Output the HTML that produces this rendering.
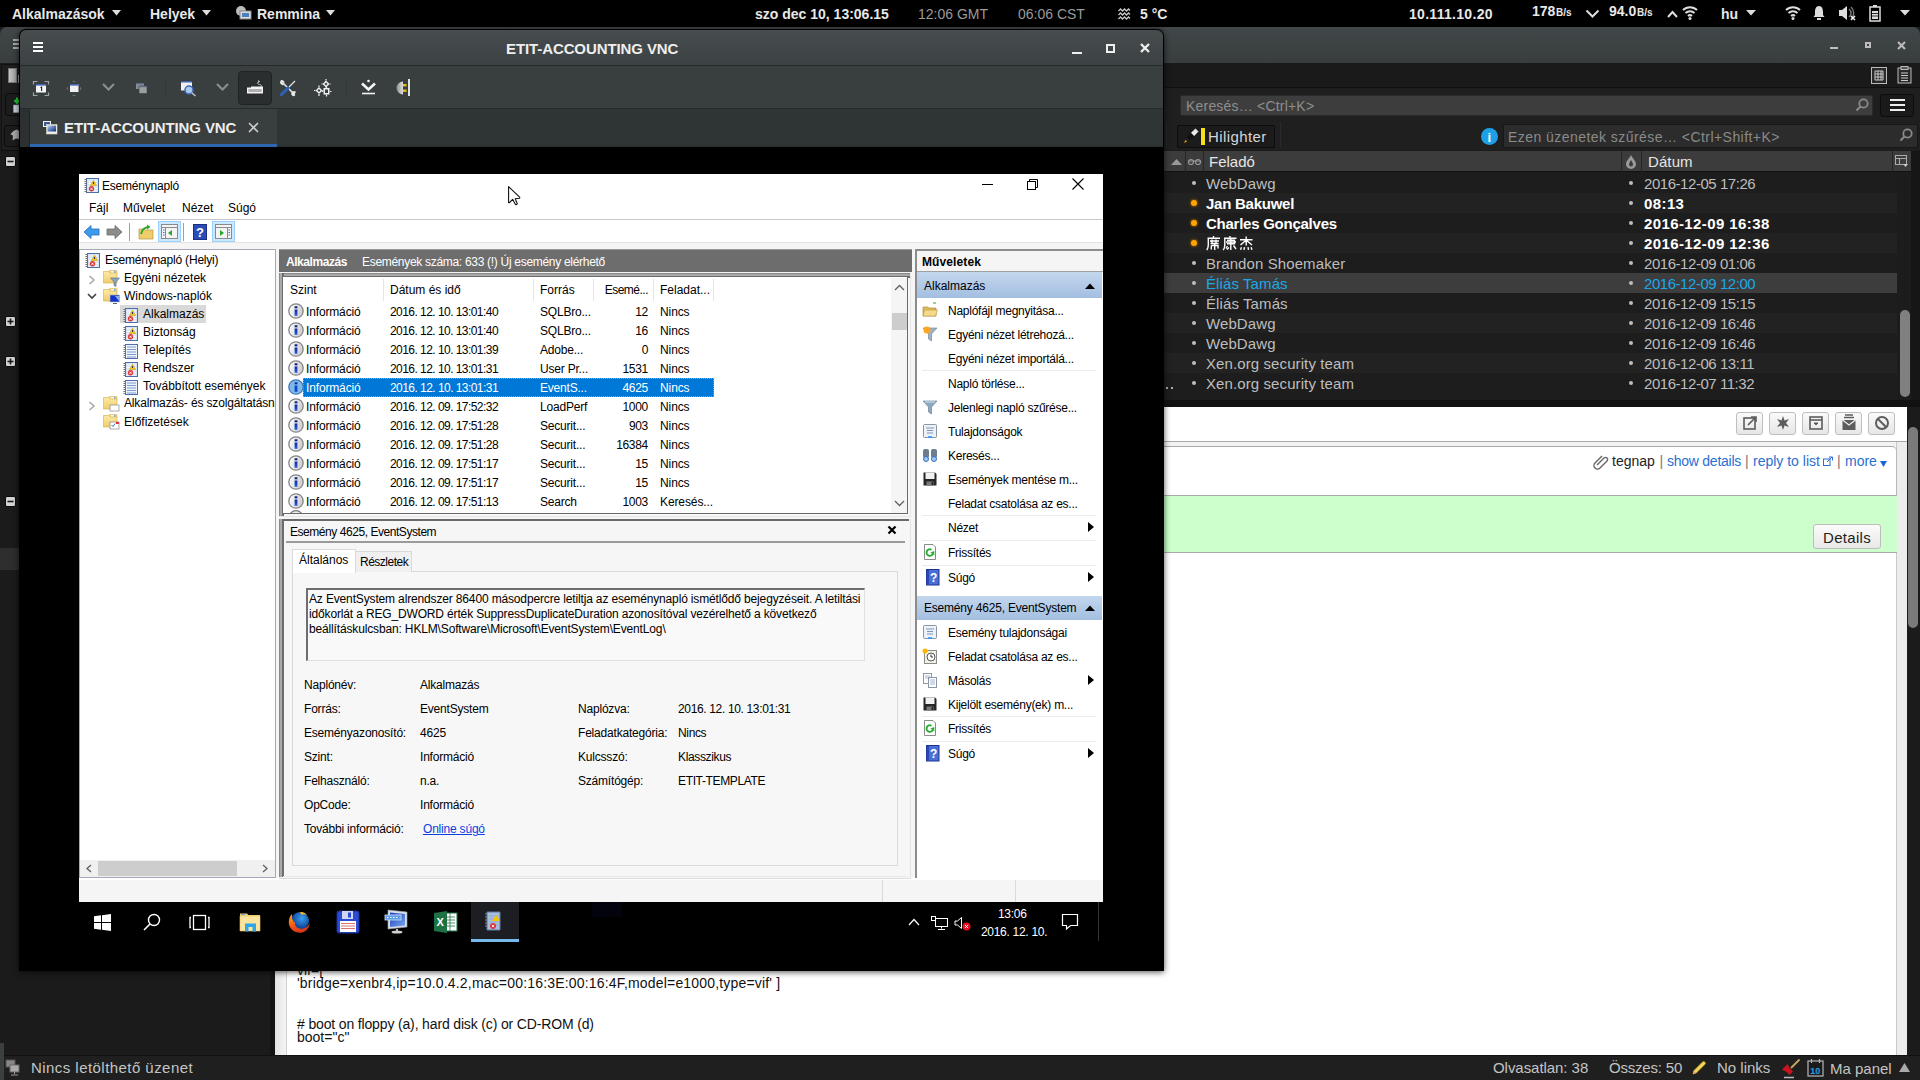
<!DOCTYPE html><html><head><meta charset="utf-8"><style>
*{margin:0;padding:0;box-sizing:border-box}
html,body{width:1920px;height:1080px;overflow:hidden;background:#1b1b1b;font-family:"Liberation Sans",sans-serif}
.a{position:absolute}
.t{position:absolute;white-space:nowrap;line-height:1}
svg{overflow:visible}
</style></head><body>
<div class="a" style="left:0px;top:27px;width:1920px;height:1053px;background:#1c1c1c"></div>
<div class="a" style="left:0px;top:27px;width:1920px;height:36px;background:linear-gradient(#414748,#383d3e);border-radius:7px 7px 0 0"></div>
<div class="a" style="left:1830px;top:47px;width:8px;height:2px;background:#bdbdbd"></div>
<div class="a" style="left:1865px;top:42px;width:6px;height:6px;border:2px solid #bdbdbd"></div>
<svg class="a" style="left:1897px;top:41px;" width="9" height="9" viewBox="0 0 9 9"><path d="M1 1L8 8M8 1L1 8" stroke="#bdbdbd" stroke-width="2"/></svg>
<div class="a" style="left:13px;top:39px;width:7px;height:2px;background:#aaa"></div>
<div class="a" style="left:13px;top:43px;width:7px;height:2px;background:#aaa"></div>
<div class="a" style="left:13px;top:47px;width:7px;height:2px;background:#aaa"></div>
<div class="a" style="left:0px;top:63px;width:1920px;height:25px;background:#1a1a1a;border-bottom:1px solid #101010"></div>
<svg class="a" style="left:1871px;top:67px;" width="16" height="17" viewBox="0 0 16 17"><rect x="0.5" y="0.5" width="15" height="16" fill="#2a2a2a" stroke="#bbb"/><path d="M4 4h8v9H4z" fill="none" stroke="#ccc"/><path d="M4 7h8M4 10h8M7 4v9M10 4v9" stroke="#ccc"/></svg>
<svg class="a" style="left:1897px;top:66px;" width="15" height="18" viewBox="0 0 15 18"><rect x="1" y="2" width="13" height="15" fill="#2a2a2a" stroke="#bbb"/><rect x="4" y="0.5" width="7" height="3" fill="#555" stroke="#bbb"/><path d="M4 7h7M4 9.5h7M4 12h7M4 14.5h7" stroke="#ccc"/></svg>
<div class="a" style="left:0px;top:88px;width:1920px;height:62px;background:#1f1f1f"></div>
<div class="a" style="left:1180px;top:95px;width:693px;height:21px;background:#3d3d3d;border:1px solid #2a2a2a;border-radius:2px"></div>
<div class="t" style="left:1186px;top:99.15px;font-size:14px;color:#8e8e8e;font-weight:normal;letter-spacing:0.2px">Keresés… &lt;Ctrl+K&gt;</div>
<svg class="a" style="left:1855px;top:98px;" width="14" height="14" viewBox="0 0 14 14"><circle cx="8.5" cy="5.5" r="4.2" fill="none" stroke="#8a8a8a" stroke-width="1.8"/><path d="M5.5 8.5L1.5 12.5" stroke="#8a8a8a" stroke-width="2"/></svg>
<div class="a" style="left:1880px;top:94px;width:34px;height:23px;background:#1a1a1a;border:1px solid #0c0c0c;border-radius:3px"></div>
<div class="a" style="left:1890px;top:99px;width:15px;height:2px;background:#eee"></div>
<div class="a" style="left:1890px;top:104px;width:15px;height:2px;background:#eee"></div>
<div class="a" style="left:1890px;top:109px;width:15px;height:2px;background:#eee"></div>
<div class="a" style="left:1166px;top:122px;width:1px;height:26px;background:#2a2a2a"></div>
<div class="a" style="left:1177px;top:125px;width:98px;height:23px;background:#1b1b1b;border:1px solid #0d0d0d;border-radius:2px"></div>
<svg class="a" style="left:1183px;top:128px;" width="16" height="16" viewBox="0 0 16 16"><path d="M8 5L12.5 0.8L15.2 3.5L11 8Z" fill="#ececec" stroke="#bdbdbd" stroke-width="0.6"/><path d="M8 5L11 8L6.5 12.5L3.5 9.5Z" fill="#111"/><path d="M3.5 9.5L6.5 12.5L4 13.5L2.5 12Z" fill="#222"/><path d="M2.5 12L4 13.5L1 15Z" fill="#f5a000"/></svg>
<div class="a" style="left:1201px;top:128px;width:4px;height:17px;background:#f7e01a"></div>
<div class="t" style="left:1208px;top:129.30px;font-size:15px;color:#d6d6d6;font-weight:normal;letter-spacing:0.4px">Hilighter</div>
<div class="a" style="left:1280px;top:122px;width:1px;height:26px;background:#2a2a2a"></div>
<div class="a" style="left:1481px;top:128px;width:17px;height:17px;border-radius:50%;background:#1ea0e8"></div>
<div class="t" style="left:1487.5px;top:131.00px;font-size:13px;color:#fff;font-weight:bold;">i</div>
<div class="a" style="left:1503px;top:124px;width:415px;height:24px;background:#2c2c2c;border:1px solid #171717;border-radius:2px"></div>
<div class="t" style="left:1508px;top:130.15px;font-size:14px;color:#8a8a8a;font-weight:normal;letter-spacing:0.45px">Ezen üzenetek szűrése… &lt;Ctrl+Shift+K&gt;</div>
<svg class="a" style="left:1899px;top:128px;" width="14" height="14" viewBox="0 0 14 14"><circle cx="8.5" cy="5.5" r="4.2" fill="none" stroke="#8a8a8a" stroke-width="1.8"/><path d="M5.5 8.5L1.5 12.5" stroke="#8a8a8a" stroke-width="2"/></svg>
<div class="a" style="left:1164px;top:151px;width:747px;height:21px;background:#3c3c3c;border-bottom:1px solid #121212"></div>
<div class="a" style="left:1185px;top:151px;width:1px;height:21px;background:#262626"></div>
<div class="a" style="left:1203px;top:151px;width:1px;height:21px;background:#262626"></div>
<div class="a" style="left:1621px;top:151px;width:1px;height:21px;background:#262626"></div>
<div class="a" style="left:1641px;top:151px;width:1px;height:21px;background:#262626"></div>
<div class="a" style="left:1892px;top:151px;width:1px;height:21px;background:#262626"></div>
<svg class="a" style="left:1170px;top:157px;" width="13" height="9" viewBox="0 0 13 9"><path d="M1 8L6.5 2L12 8Z" fill="#9a9a9a"/></svg>
<svg class="a" style="left:1187px;top:158px;" width="15" height="8" viewBox="0 0 15 8"><circle cx="4" cy="4" r="2.5" fill="none" stroke="#999" stroke-width="1.2"/><circle cx="11" cy="4" r="2.5" fill="none" stroke="#999" stroke-width="1.2"/><path d="M1 3h13" stroke="#999" stroke-width="1"/></svg>
<div class="t" style="left:1209px;top:154.30px;font-size:15px;color:#e6e6e6;font-weight:normal;letter-spacing:0px">Feladó</div>
<svg class="a" style="left:1624px;top:154px;" width="14" height="15" viewBox="0 0 14 15"><path d="M7 1C9 5 12 7 12 10A5 5 0 0 1 2 10C2 7 5 5 7 1Z" fill="#9a9a9a"/><path d="M7 6C8 8 9 9 9 10.5A2 2 0 0 1 5 10.5C5 9 6 8 7 6Z" fill="#3c3c3c"/></svg>
<div class="t" style="left:1648px;top:154.30px;font-size:15px;color:#e6e6e6;font-weight:normal;letter-spacing:0.1px">Dátum</div>
<svg class="a" style="left:1895px;top:155px;" width="14" height="13" viewBox="0 0 14 13"><rect x="0.5" y="0.5" width="11" height="9" fill="none" stroke="#aaa"/><path d="M0.5 3.5h11M4.5 3.5v6" stroke="#aaa"/><path d="M8 9L13 9L10.5 12Z" fill="#ccc"/></svg>
<div class="a" style="left:1164px;top:173px;width:735px;height:20px;background:#1d1d1d"></div>
<div class="a" style="left:1192px;top:181px;width:4px;height:4px;background:#bdbdbd;border-radius:50%"></div>
<div class="a" style="left:1629px;top:181px;width:4px;height:4px;background:#bdbdbd;border-radius:50%"></div>
<div class="t" style="left:1206px;top:176.30px;font-size:15px;color:#bdbdbd;font-weight:normal;letter-spacing:0.1px">WebDawg</div>
<div class="t" style="left:1644px;top:176.30px;font-size:15px;color:#bdbdbd;font-weight:normal;letter-spacing:-0.45px">2016-12-05 17:26</div>
<div class="a" style="left:1164px;top:193px;width:735px;height:20px;background:#222222"></div>
<div class="a" style="left:1191px;top:200px;width:6px;height:6px;border-radius:50%;background:#ffa400;box-shadow:0 0 2px 1px #7a4a00"></div>
<div class="a" style="left:1629px;top:201px;width:4px;height:4px;background:#bdbdbd;border-radius:50%"></div>
<div class="t" style="left:1206px;top:196.30px;font-size:15px;color:#ffffff;font-weight:bold;letter-spacing:-0.25px">Jan Bakuwel</div>
<div class="t" style="left:1644px;top:196.30px;font-size:15px;color:#ffffff;font-weight:bold;letter-spacing:0.4px">08:13</div>
<div class="a" style="left:1164px;top:213px;width:735px;height:20px;background:#1d1d1d"></div>
<div class="a" style="left:1191px;top:220px;width:6px;height:6px;border-radius:50%;background:#ffa400;box-shadow:0 0 2px 1px #7a4a00"></div>
<div class="a" style="left:1629px;top:221px;width:4px;height:4px;background:#bdbdbd;border-radius:50%"></div>
<div class="t" style="left:1206px;top:216.30px;font-size:15px;color:#ffffff;font-weight:bold;letter-spacing:-0.25px">Charles Gonçalves</div>
<div class="t" style="left:1644px;top:216.30px;font-size:15px;color:#ffffff;font-weight:bold;letter-spacing:0.4px">2016-12-09 16:38</div>
<div class="a" style="left:1164px;top:233px;width:735px;height:20px;background:#222222"></div>
<div class="a" style="left:1191px;top:240px;width:6px;height:6px;border-radius:50%;background:#ffa400;box-shadow:0 0 2px 1px #7a4a00"></div>
<div class="a" style="left:1629px;top:241px;width:4px;height:4px;background:#bdbdbd;border-radius:50%"></div>
<svg class="a" style="left:1206px;top:236px;" width="48" height="15" viewBox="0 0 48 15"><g stroke="#fff" stroke-width="1.4" fill="none"><path d="M7.5 0v2M1.5 2.3H14M2.3 2.3V9Q2.3 12 0.7 14M4 5H13M6 3.5V7.5M10 3.5V7.5M4.5 7.5H12.5M5.3 9.5V13.5M5.3 9.5H12V12.5M8.7 8V14"/><g transform="translate(16.5,0)"><path d="M7.5 0v2M1.5 2.3H14M2.3 2.3V9Q2.3 12 0.7 14M4.5 4.3H12V7.8H4.5M3.5 6H13.5M8.3 3V14M5 10L3.5 12.5M11 9.5L13.5 13M6.5 11.5L4.5 13.5"/></g><g transform="translate(33,0)"><path d="M1 3.8H13.5M7.2 0.5V9.5M7 4.2L1.5 9M7.4 4.2L13 9M2.5 11.2L1.5 13.8M5.5 11.2L5 13.8M9 11.2L9.5 13.8M12 11.2L13 13.8"/></g></g></svg>
<div class="t" style="left:1644px;top:236.30px;font-size:15px;color:#ffffff;font-weight:bold;letter-spacing:0.4px">2016-12-09 12:36</div>
<div class="a" style="left:1164px;top:253px;width:735px;height:20px;background:#1d1d1d"></div>
<div class="a" style="left:1192px;top:261px;width:4px;height:4px;background:#bdbdbd;border-radius:50%"></div>
<div class="a" style="left:1629px;top:261px;width:4px;height:4px;background:#bdbdbd;border-radius:50%"></div>
<div class="t" style="left:1206px;top:256.30px;font-size:15px;color:#bdbdbd;font-weight:normal;letter-spacing:0.1px">Brandon Shoemaker</div>
<div class="t" style="left:1644px;top:256.30px;font-size:15px;color:#bdbdbd;font-weight:normal;letter-spacing:-0.45px">2016-12-09 01:06</div>
<div class="a" style="left:1164px;top:273px;width:735px;height:20px;background:#3d3d3d"></div>
<div class="a" style="left:1192px;top:281px;width:4px;height:4px;background:#bdbdbd;border-radius:50%"></div>
<div class="a" style="left:1629px;top:281px;width:4px;height:4px;background:#bdbdbd;border-radius:50%"></div>
<div class="t" style="left:1206px;top:276.30px;font-size:15px;color:#1ba8e8;font-weight:normal;letter-spacing:0.1px">Éliás Tamás</div>
<div class="t" style="left:1644px;top:276.30px;font-size:15px;color:#1ba8e8;font-weight:normal;letter-spacing:-0.45px">2016-12-09 12:00</div>
<div class="a" style="left:1164px;top:293px;width:735px;height:20px;background:#1d1d1d"></div>
<div class="a" style="left:1192px;top:301px;width:4px;height:4px;background:#bdbdbd;border-radius:50%"></div>
<div class="a" style="left:1629px;top:301px;width:4px;height:4px;background:#bdbdbd;border-radius:50%"></div>
<div class="t" style="left:1206px;top:296.30px;font-size:15px;color:#bdbdbd;font-weight:normal;letter-spacing:0.1px">Éliás Tamás</div>
<div class="t" style="left:1644px;top:296.30px;font-size:15px;color:#bdbdbd;font-weight:normal;letter-spacing:-0.45px">2016-12-09 15:15</div>
<div class="a" style="left:1164px;top:313px;width:735px;height:20px;background:#222222"></div>
<div class="a" style="left:1192px;top:321px;width:4px;height:4px;background:#bdbdbd;border-radius:50%"></div>
<div class="a" style="left:1629px;top:321px;width:4px;height:4px;background:#bdbdbd;border-radius:50%"></div>
<div class="t" style="left:1206px;top:316.30px;font-size:15px;color:#bdbdbd;font-weight:normal;letter-spacing:0.1px">WebDawg</div>
<div class="t" style="left:1644px;top:316.30px;font-size:15px;color:#bdbdbd;font-weight:normal;letter-spacing:-0.45px">2016-12-09 16:46</div>
<div class="a" style="left:1164px;top:333px;width:735px;height:20px;background:#1d1d1d"></div>
<div class="a" style="left:1192px;top:341px;width:4px;height:4px;background:#bdbdbd;border-radius:50%"></div>
<div class="a" style="left:1629px;top:341px;width:4px;height:4px;background:#bdbdbd;border-radius:50%"></div>
<div class="t" style="left:1206px;top:336.30px;font-size:15px;color:#bdbdbd;font-weight:normal;letter-spacing:0.1px">WebDawg</div>
<div class="t" style="left:1644px;top:336.30px;font-size:15px;color:#bdbdbd;font-weight:normal;letter-spacing:-0.45px">2016-12-09 16:46</div>
<div class="a" style="left:1164px;top:353px;width:735px;height:20px;background:#222222"></div>
<div class="a" style="left:1192px;top:361px;width:4px;height:4px;background:#bdbdbd;border-radius:50%"></div>
<div class="a" style="left:1629px;top:361px;width:4px;height:4px;background:#bdbdbd;border-radius:50%"></div>
<div class="t" style="left:1206px;top:356.30px;font-size:15px;color:#bdbdbd;font-weight:normal;letter-spacing:0.1px">Xen.org security team</div>
<div class="t" style="left:1644px;top:356.30px;font-size:15px;color:#bdbdbd;font-weight:normal;letter-spacing:-0.45px">2016-12-06 13:11</div>
<div class="a" style="left:1164px;top:373px;width:735px;height:20px;background:#1d1d1d"></div>
<div class="a" style="left:1192px;top:381px;width:4px;height:4px;background:#bdbdbd;border-radius:50%"></div>
<div class="a" style="left:1629px;top:381px;width:4px;height:4px;background:#bdbdbd;border-radius:50%"></div>
<div class="t" style="left:1206px;top:376.30px;font-size:15px;color:#bdbdbd;font-weight:normal;letter-spacing:0.1px">Xen.org security team</div>
<div class="t" style="left:1644px;top:376.30px;font-size:15px;color:#bdbdbd;font-weight:normal;letter-spacing:-0.45px">2016-12-07 11:32</div>
<div class="a" style="left:1164px;top:393px;width:733px;height:7px;background:#1d1d1d"></div>
<div class="a" style="left:1166px;top:387px;width:2px;height:2px;background:#aaa"></div>
<div class="a" style="left:1171px;top:387px;width:2px;height:2px;background:#aaa"></div>
<div class="a" style="left:1911px;top:151px;width:9px;height:256px;background:#161616"></div>
<div class="a" style="left:1897px;top:172px;width:14px;height:228px;background:#1c1c1c"></div>
<div class="a" style="left:1900px;top:310px;width:10px;height:87px;background:#808080;border-radius:5px"></div>
<div class="a" style="left:0px;top:400px;width:1920px;height:7px;background:#111"></div>
<div class="a" style="left:275px;top:407px;width:1632px;height:648px;background:#fff"></div>
<div class="a" style="left:275px;top:407px;width:11px;height:648px;background:linear-gradient(90deg,#e4e4e4,#f4f4f4)"></div>
<div class="a" style="left:286px;top:407px;width:1px;height:648px;background:#d0d0d0"></div>
<div class="a" style="left:1164px;top:441px;width:743px;height:1px;background:#a8a8a8"></div>
<div class="a" style="left:1164px;top:442px;width:743px;height:4px;background:#f3f3f3"></div>
<div class="a" style="left:1896px;top:442px;width:11px;height:613px;background:#ececec;border-left:1px solid #c8c8c8"></div>
<div class="a" style="left:1164px;top:446px;width:733px;height:60px;border-top:1px solid #a8a8a8;border-right:1px solid #b8b8b8;border-top-right-radius:5px"></div>
<div class="a" style="left:1736px;top:412px;width:27px;height:23px;border:1px solid #bfbfbf;border-radius:3px;background:linear-gradient(#fafafa,#e6e6e6)"></div>
<svg class="a" style="left:1742px;top:414px;" width="16" height="18" viewBox="0 0 16 18"><rect x="2" y="4" width="11" height="11" fill="none" stroke="#5c5c5c" stroke-width="1.6"/><path d="M6 11L13 4M9 3h5v5" stroke="#5c5c5c" stroke-width="1.6" fill="none"/></svg>
<div class="a" style="left:1769px;top:412px;width:27px;height:23px;border:1px solid #bfbfbf;border-radius:3px;background:linear-gradient(#fafafa,#e6e6e6)"></div>
<svg class="a" style="left:1775px;top:415px;" width="16" height="16" viewBox="0 0 16 16"><path d="M8 1L9.5 5.5L14 4L11 8L14 12L9.5 10.5L8 15L6.5 10.5L2 12L5 8L2 4L6.5 5.5Z" fill="#5c5c5c"/></svg>
<div class="a" style="left:1802px;top:412px;width:27px;height:23px;border:1px solid #bfbfbf;border-radius:3px;background:linear-gradient(#fafafa,#e6e6e6)"></div>
<svg class="a" style="left:1808px;top:415px;" width="16" height="16" viewBox="0 0 16 16"><rect x="2" y="2" width="12" height="12" fill="none" stroke="#5c5c5c" stroke-width="1.6"/><path d="M2 5h12" stroke="#5c5c5c" stroke-width="1.6"/><path d="M6 8h4l-2 2Z" fill="#5c5c5c" stroke="#5c5c5c"/></svg>
<div class="a" style="left:1835px;top:412px;width:27px;height:23px;border:1px solid #bfbfbf;border-radius:3px;background:linear-gradient(#fafafa,#e6e6e6)"></div>
<svg class="a" style="left:1841px;top:414px;" width="16" height="18" viewBox="0 0 16 18"><path d="M4 1h8M3 3.5h10" stroke="#5c5c5c" stroke-width="1.4"/><path d="M1.5 6h13v10h-13Z" fill="#5c5c5c"/><path d="M1.5 6L8 11L14.5 6" stroke="#eee" stroke-width="1.2" fill="none"/></svg>
<div class="a" style="left:1868px;top:412px;width:27px;height:23px;border:1px solid #bfbfbf;border-radius:3px;background:linear-gradient(#fafafa,#e6e6e6)"></div>
<svg class="a" style="left:1874px;top:415px;" width="16" height="16" viewBox="0 0 16 16"><circle cx="8" cy="8" r="6" fill="none" stroke="#5c5c5c" stroke-width="2"/><path d="M4 4L12 12" stroke="#5c5c5c" stroke-width="2"/></svg>
<svg class="a" style="left:1594px;top:454px;" width="14" height="14" viewBox="0 0 14 14"><path d="M3 11L10 4A2 2 0 0 1 13 7L6 14A3.5 3.5 0 0 1 1 9L8 2" fill="none" stroke="#666" stroke-width="1.4"/></svg>
<div class="t" style="left:1612px;top:454.15px;font-size:14px;color:#222;font-weight:normal;">tegnap</div>
<div class="t" style="left:1659.5px;top:454.15px;font-size:14px;color:#777;font-weight:normal;">|</div>
<div class="t" style="left:1667px;top:454.15px;font-size:14px;color:#2a6fd1;font-weight:normal;letter-spacing:-0.25px">show details</div>
<div class="t" style="left:1745px;top:454.15px;font-size:14px;color:#777;font-weight:normal;">|</div>
<div class="t" style="left:1753px;top:454.15px;font-size:14px;color:#2a6fd1;font-weight:normal;">reply to list</div>
<svg class="a" style="left:1823px;top:456px;" width="10" height="10" viewBox="0 0 10 10"><rect x="0.5" y="3" width="6.5" height="6.5" fill="none" stroke="#2a6fd1"/><path d="M4 6L9 1M6 1h3.5v3.5" stroke="#2a6fd1" fill="none"/></svg>
<div class="t" style="left:1837px;top:454.15px;font-size:14px;color:#777;font-weight:normal;">|</div>
<div class="t" style="left:1845px;top:454.15px;font-size:14px;color:#2a6fd1;font-weight:normal;">more</div>
<svg class="a" style="left:1880px;top:461px;" width="7" height="6" viewBox="0 0 7 6"><path d="M0 0h7L3.5 6Z" fill="#1a64e0"/></svg>
<div class="a" style="left:1164px;top:495px;width:733px;height:1px;background:#a9a9a9"></div>
<div class="a" style="left:1164px;top:496px;width:733px;height:56px;background:#ccffcc"></div>
<div class="a" style="left:1164px;top:552px;width:733px;height:1px;background:#a9a9a9"></div>
<div class="a" style="left:1813px;top:524px;width:68px;height:25px;border:1px solid #bdbdbd;border-radius:3px;background:linear-gradient(#fbfbfb,#e8e8e8)"></div>
<div class="t" style="left:1823px;top:530.30px;font-size:15px;color:#222;font-weight:normal;letter-spacing:0.3px">Details</div>
<div class="a" style="left:1907px;top:407px;width:13px;height:648px;background:#1b1b1b"></div>
<div class="a" style="left:1908px;top:427px;width:10px;height:201px;background:#7a7a7a;border-radius:5px"></div>
<div class="t" style="left:297px;top:963.15px;font-size:14px;color:#111;font-weight:normal;">vif=[</div>
<div class="t" style="left:297px;top:975.65px;font-size:14px;color:#111;font-weight:normal;letter-spacing:0.18px">'bridge=xenbr4,ip=10.0.4.2,mac=00:16:3E:00:16:4F,model=e1000,type=vif' ]</div>
<div class="t" style="left:297px;top:1016.65px;font-size:14px;color:#111;font-weight:normal;letter-spacing:-0.15px"># boot on floppy (a), hard disk (c) or CD-ROM (d)</div>
<div class="t" style="left:297px;top:1029.65px;font-size:14px;color:#111;font-weight:normal;">boot="c"</div>
<div class="a" style="left:0px;top:63px;width:275px;height:992px;background:#1b1b1b"></div>
<div class="a" style="left:270px;top:407px;width:5px;height:648px;background:#141414"></div>
<div class="a" style="left:1px;top:64px;width:19px;height:86px;background:#1e1e1e;border-left:1px solid #121212;border-top:1px solid #121212"></div>
<div class="a" style="left:8px;top:68px;width:9px;height:15px;background:linear-gradient(90deg,#c4c4c4,#9c9c9c);border:1px solid #777"></div>
<div class="a" style="left:18px;top:75px;width:1px;height:8px;background:#999"></div>
<div class="a" style="left:5px;top:93px;width:15px;height:23px;background:#1c1c1c;border:1px solid #0c0c0c;border-radius:3px"></div>
<svg class="a" style="left:13px;top:97px;" width="7" height="16" viewBox="0 0 7 16"><path d="M4 0.5v4M1.5 3l2.5 3l2.5-3" stroke="#1fc22a" stroke-width="2" fill="none"/><path d="M0.5 8h7v7.5h-7Z" fill="#c8d0d8" stroke="#8a96a6" stroke-width="0.6"/></svg>
<div class="a" style="left:4px;top:125px;width:16px;height:22px;background:#1c1c1c;border:1px solid #0c0c0c;border-radius:3px"></div>
<svg class="a" style="left:10px;top:129px;" width="9" height="12" viewBox="0 0 9 12"><path d="M7 0.5C4 1 2 3 0.5 5.5L3 6.5L2.5 11.5L6 9.5L9 10V2Z" fill="#a8a8a8"/></svg>
<div class="a" style="left:1px;top:150px;width:19px;height:1px;background:#0e0e0e"></div>
<svg class="a" style="left:5px;top:156px;" width="11" height="11" viewBox="0 0 11 11"><rect x="0.5" y="0.5" width="10" height="10" rx="1.5" fill="#d4d4d4" stroke="#0a0a0a"/><path d="M2.5 5.5h6" stroke="#1a1a1a" stroke-width="1.6"/></svg>
<svg class="a" style="left:5px;top:316px;" width="11" height="11" viewBox="0 0 11 11"><rect x="0.5" y="0.5" width="10" height="10" rx="1.5" fill="#d4d4d4" stroke="#0a0a0a"/><path d="M2.5 5.5h6" stroke="#1a1a1a" stroke-width="1.6"/><path d="M5.5 2.5v6" stroke="#1a1a1a" stroke-width="1.6"/></svg>
<svg class="a" style="left:5px;top:356px;" width="11" height="11" viewBox="0 0 11 11"><rect x="0.5" y="0.5" width="10" height="10" rx="1.5" fill="#d4d4d4" stroke="#0a0a0a"/><path d="M2.5 5.5h6" stroke="#1a1a1a" stroke-width="1.6"/><path d="M5.5 2.5v6" stroke="#1a1a1a" stroke-width="1.6"/></svg>
<svg class="a" style="left:5px;top:496px;" width="11" height="11" viewBox="0 0 11 11"><rect x="0.5" y="0.5" width="10" height="10" rx="1.5" fill="#d4d4d4" stroke="#0a0a0a"/><path d="M2.5 5.5h6" stroke="#1a1a1a" stroke-width="1.6"/></svg>
<div class="a" style="left:0px;top:548px;width:20px;height:22px;background:#2e2e2e"></div>
<div class="a" style="left:0px;top:1043px;width:4px;height:37px;background:#3b3f40"></div>
<div class="a" style="left:0px;top:1055px;width:1920px;height:25px;background:#1f1f1f;border-top:1px solid #111"></div>
<div class="a" style="left:0px;top:1055px;width:4px;height:25px;background:#3b3f40"></div>
<svg class="a" style="left:5px;top:1059px;" width="15" height="17" viewBox="0 0 15 17"><rect x="1" y="1" width="9" height="7" fill="#888" stroke="#555"/><rect x="5" y="6" width="9" height="7" fill="#aaa" stroke="#666"/><path d="M9.5 13v2M6 16h7" stroke="#999"/></svg>
<div class="t" style="left:31px;top:1060.30px;font-size:15px;color:#c4c4c4;font-weight:normal;letter-spacing:0.45px">Nincs letölthető üzenet</div>
<div class="t" style="left:1493px;top:1060.30px;font-size:15px;color:#c4c4c4;font-weight:normal;letter-spacing:-0.05px">Olvasatlan: 38</div>
<div class="t" style="left:1609px;top:1060.30px;font-size:15px;color:#c4c4c4;font-weight:normal;letter-spacing:-0.2px">Összes: 50</div>
<svg class="a" style="left:1691px;top:1060px;" width="16" height="16" viewBox="0 0 16 16"><path d="M2 14L3 10.5L11.5 2Q13 1 14 2.2Q15 3.3 13.8 4.5L5.5 12.8Z" fill="#f6d65a" stroke="#c49a20" stroke-width="0.8"/><path d="M2 14L3 10.5L5.5 12.8Z" fill="#e8b080"/></svg>
<div class="t" style="left:1717px;top:1060.30px;font-size:15px;color:#c4c4c4;font-weight:normal;letter-spacing:0px">No links</div>
<svg class="a" style="left:1781px;top:1058px;" width="20" height="20" viewBox="0 0 20 20"><path d="M18.5 1.5L10 10" stroke="#c9a86a" stroke-width="1.8"/><path d="M1 11.5Q5 13 8.5 17L12 13.5Q8 10 6.5 6Z" fill="#c8141e"/><path d="M3 19.5H13" stroke="#bbb" stroke-width="1.5"/></svg>
<svg class="a" style="left:1807px;top:1058px;" width="17" height="19" viewBox="0 0 17 19"><rect x="1" y="3" width="15" height="15" fill="#1b1b1b" stroke="#b8b8b8" stroke-width="1.2"/><path d="M4.5 1v4M12.5 1v4" stroke="#b8b8b8" stroke-width="1.2"/><text x="3.2" y="15.5" font-size="9" fill="#28a0e8" font-family="Liberation Sans" font-weight="bold">10</text></svg>
<div class="t" style="left:1830px;top:1061.30px;font-size:15px;color:#c4c4c4;font-weight:normal;letter-spacing:0px">Ma panel</div>
<svg class="a" style="left:1899px;top:1063px;" width="11" height="9" viewBox="0 0 11 9"><path d="M0 9L5.5 0L11 9Z" fill="#aaa"/></svg>
<div class="a" style="left:0px;top:0px;width:1920px;height:27px;background:#000"></div>
<div class="t" style="left:12px;top:7.15px;font-size:14px;color:#e8e8e8;font-weight:bold;">Alkalmazások</div>
<svg class="a" style="left:112px;top:10px;" width="9" height="6" viewBox="0 0 9 6"><path d="M0 0h9L4.5 5.5Z" fill="#ddd"/></svg>
<div class="t" style="left:150px;top:7.15px;font-size:14px;color:#e8e8e8;font-weight:bold;">Helyek</div>
<svg class="a" style="left:202px;top:10px;" width="9" height="6" viewBox="0 0 9 6"><path d="M0 0h9L4.5 5.5Z" fill="#ddd"/></svg>
<svg class="a" style="left:235px;top:5px;" width="17" height="15" viewBox="0 0 17 15"><circle cx="6" cy="6" r="5" fill="#bbb"/><rect x="5" y="6" width="11" height="8" fill="#ddd" stroke="#888"/><rect x="7" y="8" width="7" height="4" fill="#4a7fc0"/></svg>
<div class="t" style="left:257px;top:7.15px;font-size:14px;color:#e8e8e8;font-weight:bold;">Remmina</div>
<svg class="a" style="left:326px;top:10px;" width="9" height="6" viewBox="0 0 9 6"><path d="M0 0h9L4.5 5.5Z" fill="#ddd"/></svg>
<div class="t" style="left:755px;top:7.15px;font-size:14px;color:#e8e8e8;font-weight:bold;">szo dec 10, 13:06.15</div>
<div class="t" style="left:918px;top:7.15px;font-size:14px;color:#9a9a9a;font-weight:normal;">12:06 GMT</div>
<div class="t" style="left:1018px;top:7.15px;font-size:14px;color:#9a9a9a;font-weight:normal;">06:06 CST</div>
<svg class="a" style="left:1118px;top:7px;" width="12" height="13" viewBox="0 0 12 13"><path d="M0.5 4L2.5 2L4.5 4L6.5 2L8.5 4L10.5 2L12 3.5M0.5 8L2.5 6L4.5 8L6.5 6L8.5 8L10.5 6L12 7.5M0.5 12L2.5 10L4.5 12L6.5 10L8.5 12L10.5 10L12 11.5" stroke="#c8c8c8" stroke-width="1.3" fill="none"/></svg>
<div class="t" style="left:1140px;top:7.15px;font-size:14px;color:#e8e8e8;font-weight:bold;">5 °C</div>
<div class="t" style="left:1409px;top:7.15px;font-size:14px;color:#e8e8e8;font-weight:bold;letter-spacing:0.3px">10.111.10.20</div>
<div class="t" style="left:1532px;top:4.15px;font-size:14px;color:#e8e8e8;font-weight:bold;">178</div>
<div class="t" style="left:1556px;top:7.54px;font-size:10px;color:#e8e8e8;font-weight:bold;">B/s</div>
<svg class="a" style="left:1585px;top:9px;" width="15" height="9" viewBox="0 0 15 9"><path d="M1.5 1.5L7.5 7.5L13.5 1.5" stroke="#ddd" stroke-width="2" fill="none"/></svg>
<div class="t" style="left:1609px;top:4.15px;font-size:14px;color:#e8e8e8;font-weight:bold;">94.0</div>
<div class="t" style="left:1637px;top:7.54px;font-size:10px;color:#e8e8e8;font-weight:bold;">B/s</div>
<svg class="a" style="left:1667px;top:10px;" width="11" height="8" viewBox="0 0 11 8"><path d="M1 7L5.5 2L10 7" stroke="#ddd" stroke-width="2" fill="none"/></svg>
<svg class="a" style="left:1682px;top:5px;" width="16" height="16" viewBox="0 0 16 16"><path d="M1 5A10 10 0 0 1 15 5" stroke="#ddd" stroke-width="2" fill="none"/><path d="M3.5 8A6.5 6.5 0 0 1 12.5 8" stroke="#ddd" stroke-width="2" fill="none"/><path d="M6 11A3 3 0 0 1 10 11" stroke="#ddd" stroke-width="2" fill="none"/><circle cx="8" cy="13.5" r="1.5" fill="#ddd"/></svg>
<div class="t" style="left:1721px;top:7.15px;font-size:14px;color:#e8e8e8;font-weight:bold;">hu</div>
<svg class="a" style="left:1746px;top:10px;" width="10" height="6" viewBox="0 0 10 6"><path d="M0 0h10L5 5.5Z" fill="#ddd"/></svg>
<svg class="a" style="left:1785px;top:5px;" width="16" height="16" viewBox="0 0 16 16"><path d="M1 5A10 10 0 0 1 15 5" stroke="#ddd" stroke-width="2" fill="none"/><path d="M3.5 8A6.5 6.5 0 0 1 12.5 8" stroke="#ddd" stroke-width="2" fill="none"/><path d="M6 11A3 3 0 0 1 10 11" stroke="#ddd" stroke-width="2" fill="none"/><circle cx="8" cy="13.5" r="1.5" fill="#ddd"/></svg>
<svg class="a" style="left:1813px;top:5px;" width="12" height="16" viewBox="0 0 12 16"><path d="M6 1C3 1 2 4 2 7V10L0.5 12H11.5L10 10V7C10 4 9 1 6 1Z" fill="#ddd"/><rect x="4" y="13" width="4" height="2" fill="#ddd"/></svg>
<svg class="a" style="left:1838px;top:5px;" width="19" height="16" viewBox="0 0 19 16"><path d="M1 5h3l5-4v14l-5-4H1Z" fill="#ddd"/><path d="M11 4A5 5 0 0 1 11 12M13 2A8 8 0 0 1 13 14" stroke="#777" stroke-width="1.5" fill="none"/><path d="M13 11l4 4M17 11l-4 4" stroke="#eee" stroke-width="1.5"/></svg>
<svg class="a" style="left:1869px;top:4px;" width="12" height="18" viewBox="0 0 12 18"><rect x="1" y="3" width="10" height="14" fill="none" stroke="#ddd" stroke-width="1.5"/><rect x="4" y="1" width="4" height="2" fill="#ddd"/><rect x="3" y="7" width="6" height="8" fill="#ddd"/><path d="M3 9.5h6M3 12h6" stroke="#000" stroke-width="0.8"/></svg>
<svg class="a" style="left:1900px;top:10px;" width="10" height="6" viewBox="0 0 10 6"><path d="M0 0h10L5 5.5Z" fill="#ddd"/></svg>
<div class="a" style="left:19px;top:29px;width:1145px;height:942px;background:#000;border-radius:7px 7px 0 0;box-shadow:0 1px 6px rgba(0,0,0,.7)"></div>
<div class="a" style="left:20px;top:30px;width:1143px;height:36px;background:linear-gradient(#474d4e,#3c4243);border-radius:6px 6px 0 0;border-bottom:1px solid #262a2b"></div>
<div class="a" style="left:33px;top:42px;width:10px;height:2px;background:#fff"></div>
<div class="a" style="left:33px;top:46px;width:10px;height:2px;background:#fff"></div>
<div class="a" style="left:33px;top:50px;width:10px;height:2px;background:#fff"></div>
<div class="t" style="left:506px;top:41.30px;font-size:15px;color:#eeeeee;font-weight:bold;letter-spacing:-0.1px">ETIT-ACCOUNTING VNC</div>
<div class="a" style="left:1072px;top:52px;width:10px;height:2px;background:#eee"></div>
<div class="a" style="left:1106px;top:44px;width:9px;height:9px;border:2px solid #eee"></div>
<svg class="a" style="left:1140px;top:43px;" width="10" height="10" viewBox="0 0 10 10"><path d="M1 1L9 9M9 1L1 9" stroke="#eee" stroke-width="2.3"/></svg>
<div class="a" style="left:20px;top:66px;width:1143px;height:43px;background:#393f3f;border-bottom:1px solid #2a2f2f"></div>
<svg class="a" style="left:32px;top:80px;" width="18" height="17" viewBox="0 0 18 17"><path d="M1.5 4.5V1.5h4M12.5 1.5h4v3M16.5 12.5v3h-4M5.5 15.5h-4v-3" stroke="#a0a4a4" stroke-width="1.2" fill="none"/><rect x="4" y="4" width="10" height="8.5" fill="#f4f4f4"/><rect x="4" y="4" width="10" height="1.6" fill="#3f63b0"/><path d="M8.5 7.5L9.6 7v4" stroke="#222" stroke-width="1.1" fill="none"/></svg>
<svg class="a" style="left:66px;top:80px;" width="16" height="17" viewBox="0 0 16 17"><path d="M8 0.5L10 2H6Z M8 16.5L6 15H10Z M0.5 8.5L2 6.5V10.5Z M15.5 8.5L14 10.5V6.5Z" fill="#6a6f6f"/><rect x="4" y="4" width="8.5" height="8" fill="#f0f0f0"/><rect x="4" y="4" width="8.5" height="1.6" fill="#3f63b0"/></svg>
<svg class="a" style="left:102px;top:83px;" width="13" height="8" viewBox="0 0 13 8"><path d="M1 1L6.5 6.5L12 1" stroke="#8c9090" stroke-width="2" fill="none"/></svg>
<svg class="a" style="left:135px;top:82px;" width="13" height="12" viewBox="0 0 13 12"><rect x="1" y="1" width="8" height="6" fill="#8a8e8e"/><rect x="1" y="1" width="8" height="1.2" fill="#5a6a8a"/><rect x="4" y="4" width="8" height="7.5" fill="#9c9f9f" stroke="#3a3f3f" stroke-width="0.6"/><rect x="4" y="4" width="8" height="1.2" fill="#5a6a8a"/></svg>
<div class="a" style="left:165px;top:78px;width:1px;height:20px;background:#323737"></div>
<svg class="a" style="left:180px;top:80px;" width="17" height="17" viewBox="0 0 17 17"><rect x="1" y="1" width="11" height="9.5" fill="#f0f0f0"/><rect x="1" y="1" width="11" height="1.5" fill="#3f63b0"/><circle cx="9" cy="10" r="4" fill="#a9c8ee" stroke="#3d6ab8" stroke-width="1.5"/><path d="M11.8 12.8L15.5 16" stroke="#b8bcbc" stroke-width="1.6"/></svg>
<svg class="a" style="left:216px;top:83px;" width="13" height="8" viewBox="0 0 13 8"><path d="M1 1L6.5 6.5L12 1" stroke="#8c9090" stroke-width="2" fill="none"/></svg>
<div class="a" style="left:238px;top:71px;width:34px;height:34px;background:#2a2e2f;border:1px solid #1f2323;border-radius:4px"></div>
<svg class="a" style="left:245px;top:79px;" width="20" height="16" viewBox="0 0 20 16"><path d="M14.5 8.5C17 8.5 17 5.5 14.5 5.5C12 5.5 12 2.5 14.5 2.5M13 1.5l1.5 1l-1.5 1" stroke="#ccc" stroke-width="0.9" fill="none"/><path d="M2 8.5h4V7.5h12v7H2Z" fill="#f2f2f2"/><rect x="3.5" y="10" width="13" height="3" fill="#9a9a9a"/><path d="M5 10v3M7 10v3M9 10v3M11 10v3M13 10v3M15 10v3" stroke="#f2f2f2" stroke-width="0.5"/></svg>
<svg class="a" style="left:279px;top:79px;" width="18" height="18" viewBox="0 0 18 18"><path d="M3.5 3.5L15.5 15.5" stroke="#e8e8e8" stroke-width="1.6"/><path d="M1 3A3 3 0 0 0 5 6L3.5 4L4 3L5.5 4.5A3 3 0 0 0 2 1Z" fill="#e8e8e8"/><path d="M13 16.5A2.5 2.5 0 0 1 17 13L15.5 15L16.5 16A2.5 2.5 0 0 1 13 16.5Z" fill="#e8e8e8"/><path d="M16 2L9 9" stroke="#e0e0e0" stroke-width="1.3"/><path d="M9 9L2.5 15.5" stroke="#2f5fb0" stroke-width="3.2" stroke-linecap="round"/></svg>
<svg class="a" style="left:314px;top:79px;" width="19" height="18" viewBox="0 0 19 18"><g fill="#f0f0f0"><path d="M12 1.5l3.5 3.5l-3.5 3.5l-3.5-3.5Z"/><path d="M5 8l3.5 3.5L5 15l-3.5-3.5Z"/><rect x="9.5" y="9" width="6" height="6.5"/></g><g fill="#393f3f"><path d="M12 3.5l1.5 1.5l-1.5 1.5l-1.5-1.5Z"/><path d="M5 10l1.5 1.5L5 13l-1.5-1.5Z"/><rect x="11" y="10.5" width="3" height="3.5"/></g><path d="M12 0v1.5M12 8.5v0.5M7.5 5h1M15.5 5h1M5 6.5v1.5M5 15v2M0 11.5h1.5M8.5 11.5h1M12.5 7.5v1.5M12.5 15.5v2M9 12.5H8M16 12.5h1.5" stroke="#f0f0f0" stroke-width="1.2"/></svg>
<div class="a" style="left:346px;top:78px;width:1px;height:20px;background:#323737"></div>
<svg class="a" style="left:360px;top:79px;" width="17" height="17" viewBox="0 0 17 17"><path d="M2 4.5L8.5 10.5L15 4.5" stroke="#f4f4f4" stroke-width="2.6" fill="none"/><circle cx="8.5" cy="2" r="1.3" fill="#f4f4f4"/><path d="M2 14.5h13" stroke="#f4f4f4" stroke-width="1.6"/></svg>
<svg class="a" style="left:394px;top:78px;" width="18" height="19" viewBox="0 0 18 19"><defs><linearGradient id="dg" x1="0" x2="1"><stop offset="0" stop-color="#8a8e8e"/><stop offset="1" stop-color="#e0e0e0"/></linearGradient></defs><path d="M9 3.5A6.5 6.5 0 0 0 9 16.5Z" fill="url(#dg)"/><rect x="9" y="6" width="3.5" height="2.4" fill="#e8c300"/><rect x="9" y="11.5" width="3.5" height="2.4" fill="#e8c300"/><rect x="14" y="1" width="2" height="17" fill="#e4e4e4"/></svg>
<div class="a" style="left:20px;top:109px;width:1143px;height:38px;background:#2f3435;border-bottom:1px solid #262a2a"></div>
<div class="a" style="left:20px;top:108px;width:1143px;height:1px;background:#262b2b"></div>
<div class="a" style="left:20px;top:109px;width:10px;height:38px;background:#2c3031"></div>
<div class="a" style="left:30px;top:109px;width:247px;height:38px;background:#393f3f"></div>
<div class="a" style="left:30px;top:144px;width:247px;height:3px;background:#2f66b0"></div>
<div class="a" style="left:29px;top:109px;width:1px;height:38px;background:#202424"></div>
<svg class="a" style="left:43px;top:121px;" width="15" height="14" viewBox="0 0 15 14"><defs><linearGradient id="g1" x1="0" y1="0" x2="1" y2="1"><stop offset="0" stop-color="#c8d4ea"/><stop offset="0.5" stop-color="#5a7ab8"/><stop offset="1" stop-color="#0e2f78"/></linearGradient></defs><rect x="0.5" y="0.5" width="7" height="5" fill="#3a5a98" stroke="#f4f4f4"/><rect x="3.5" y="3.5" width="10.5" height="9.5" fill="#f0efe8" stroke="#d8d6cc" stroke-width="0.6"/><rect x="4.5" y="4.5" width="8.5" height="6" fill="url(#g1)"/></svg>
<div class="t" style="left:64px;top:120.30px;font-size:15px;color:#eeeeee;font-weight:bold;letter-spacing:-0.1px">ETIT-ACCOUNTING VNC</div>
<svg class="a" style="left:248px;top:122px;" width="11" height="11" viewBox="0 0 11 11"><path d="M1 1L10 10M10 1L1 10" stroke="#ccc" stroke-width="1.6"/></svg>
<div class="a" style="left:20px;top:147px;width:1143px;height:823px;background:#000"></div>
<div class="a" style="left:79px;top:174px;width:1024px;height:728px;background:#fff"></div>
<svg class="a" style="left:84px;top:178px;" width="15" height="15" viewBox="0 0 15 15"><rect x="2.5" y="0.5" width="12" height="14" fill="#d6e4f5" stroke="#4d6eaa"/><path d="M4 3h9M4 5.5h9M4 8h9M4 10.5h9M4 13h9" stroke="#f6f9fd" stroke-width="1"/><path d="M0.5 1.5h2.5M0.5 3.5h2.5M0.5 5.5h2.5M0.5 7.5h2.5M0.5 9.5h2.5M0.5 11.5h2.5M0.5 13.5h2.5" stroke="#707070" stroke-width="1"/><path d="M9.5 2.2L12.6 7.6H6.4Z" fill="#f5c518" stroke="#c09000" stroke-width="0.5"/><path d="M9.5 4v2" stroke="#333" stroke-width="1"/><circle cx="7.5" cy="10.8" r="2.7" fill="#dc3a3a"/><path d="M6.4 9.7l2.2 2.2M8.6 9.7l-2.2 2.2" stroke="#fff" stroke-width="0.9"/></svg>
<div class="t" style="left:102px;top:179.74px;font-size:12px;color:#000;font-weight:normal;letter-spacing:-0.2px">Eseménynapló</div>
<div class="a" style="left:982px;top:184px;width:11px;height:1px;background:#000"></div>
<svg class="a" style="left:1026px;top:178px;" width="13" height="13" viewBox="0 0 13 13"><rect x="1.5" y="3.5" width="8" height="8" fill="#fff" stroke="#000"/><path d="M3.5 3.5V1.5h8v8h-2" fill="none" stroke="#000"/></svg>
<svg class="a" style="left:1072px;top:178px;" width="12" height="12" viewBox="0 0 12 12"><path d="M0.5 0.5L11.5 11.5M11.5 0.5L0.5 11.5" stroke="#000" stroke-width="1.1"/></svg>
<div class="t" style="left:89px;top:202.24px;font-size:12px;color:#000;font-weight:normal;">Fájl</div>
<div class="t" style="left:123px;top:202.24px;font-size:12px;color:#000;font-weight:normal;">Művelet</div>
<div class="t" style="left:182px;top:202.24px;font-size:12px;color:#000;font-weight:normal;">Nézet</div>
<div class="t" style="left:228px;top:202.24px;font-size:12px;color:#000;font-weight:normal;">Súgó</div>
<div class="a" style="left:79px;top:219px;width:1024px;height:1px;background:#c8c8d0"></div>
<div class="a" style="left:79px;top:220px;width:1024px;height:23px;background:#fff"></div>
<svg class="a" style="left:83px;top:224px;" width="17" height="16" viewBox="0 0 17 16"><path d="M1 8L8 1.5V5H16V11H8V14.5Z" fill="#3d9be9" stroke="#1e6fc0" stroke-width="0.8"/></svg>
<svg class="a" style="left:106px;top:224px;" width="17" height="16" viewBox="0 0 17 16"><path d="M16 8L9 1.5V5H1V11H9V14.5Z" fill="#8c8c8c" stroke="#6a6a6a" stroke-width="0.8"/></svg>
<div class="a" style="left:129px;top:223px;width:1px;height:18px;background:#a0a0a0"></div>
<svg class="a" style="left:138px;top:224px;" width="16" height="16" viewBox="0 0 16 16"><path d="M1 5h5l1 1h8v9H1Z" fill="#f0cd6c" stroke="#b89a40" stroke-width="0.7"/><path d="M3 10C4 5 8 3 11 3" stroke="#2aa82a" stroke-width="2" fill="none"/><path d="M9 0.5L12.5 3L9 5.5Z" fill="#2aa82a"/></svg>
<div class="a" style="left:158px;top:221px;width:23px;height:21px;background:#cce8ff;border:1px solid #99d1ff"></div>
<svg class="a" style="left:161px;top:224px;" width="17" height="15" viewBox="0 0 17 15"><rect x="0.5" y="0.5" width="16" height="14" fill="#f4f4f4" stroke="#8a8a8a"/><path d="M0.5 3.5h16M4.5 3.5v11" stroke="#8a8a8a"/><path d="M2 6h1.5M2 8.5h1.5M2 11h1.5" stroke="#3a6fc0"/><path d="M11 6v6L7 9Z" fill="#2aa82a"/></svg>
<div class="a" style="left:183px;top:223px;width:1px;height:18px;background:#a0a0a0"></div>
<svg class="a" style="left:193px;top:224px;" width="14" height="16" viewBox="0 0 14 16"><rect x="0.5" y="0.5" width="13" height="15" fill="#2a4bb8" stroke="#1a2f80"/><text x="3" y="13" font-size="13" fill="#fff" font-family="Liberation Sans" font-weight="bold">?</text></svg>
<div class="a" style="left:212px;top:221px;width:23px;height:21px;background:#cce8ff;border:1px solid #99d1ff"></div>
<svg class="a" style="left:215px;top:224px;" width="17" height="15" viewBox="0 0 17 15"><rect x="0.5" y="0.5" width="16" height="14" fill="#f4f4f4" stroke="#8a8a8a"/><path d="M0.5 3.5h16M12.5 3.5v11" stroke="#8a8a8a"/><path d="M13.5 6h1.5M13.5 8.5h1.5M13.5 11h1.5" stroke="#3a6fc0"/><path d="M5 6v6L9 9Z" fill="#2aa82a"/></svg>
<div class="a" style="left:79px;top:242px;width:1024px;height:1px;background:#e3e3e3"></div>
<div class="a" style="left:79px;top:243px;width:1024px;height:635px;background:#f5f5f5"></div>
<div class="a" style="left:79px;top:249px;width:197px;height:629px;background:#fff;border:1px solid #a6a6b8"></div>
<svg class="a" style="left:85px;top:253px;" width="15" height="15" viewBox="0 0 15 15"><rect x="2.5" y="0.5" width="12" height="14" fill="#d6e4f5" stroke="#4d6eaa"/><path d="M4 3h9M4 5.5h9M4 8h9M4 10.5h9M4 13h9" stroke="#f6f9fd" stroke-width="1"/><path d="M0.5 1.5h2.5M0.5 3.5h2.5M0.5 5.5h2.5M0.5 7.5h2.5M0.5 9.5h2.5M0.5 11.5h2.5M0.5 13.5h2.5" stroke="#707070" stroke-width="1"/><path d="M9.5 2.2L12.6 7.6H6.4Z" fill="#f5c518" stroke="#c09000" stroke-width="0.5"/><path d="M9.5 4v2" stroke="#333" stroke-width="1"/><circle cx="7.5" cy="10.8" r="2.7" fill="#dc3a3a"/><path d="M6.4 9.7l2.2 2.2M8.6 9.7l-2.2 2.2" stroke="#fff" stroke-width="0.9"/></svg>
<div class="t" style="left:105px;top:254.24px;font-size:12px;color:#000;font-weight:normal;letter-spacing:-0.2px">Eseménynapló (Helyi)</div>
<svg class="a" style="left:88px;top:275px;" width="8" height="10" viewBox="0 0 8 10"><path d="M1.5 1L6 5L1.5 9" stroke="#a6a6a6" stroke-width="1.5" fill="none"/></svg>
<svg class="a" style="left:103px;top:270px;" width="17" height="16" viewBox="0 0 17 16"><defs><linearGradient id="fdg" x1="0" y1="0" x2="0" y2="1"><stop offset="0" stop-color="#fdeaa8"/><stop offset="1" stop-color="#f1cd6a"/></linearGradient></defs><path d="M6.5 0.5h7.5v3h-7.5Z" fill="#f6dc8e" stroke="#d9b457" stroke-width="0.6"/><rect x="8" y="1.3" width="4.5" height="1.4" fill="#fff"/><rect x="11" y="1.3" width="1.5" height="1.4" fill="#3a8ee0"/><path d="M0.5 1.5h5.5l1 1.5h7v10H0.5Z" fill="url(#fdg)" stroke="#d9b457" stroke-width="0.7"/><path d="M7.5 8h9L13 12V16.5L11 15.5V12Z" fill="#8ea4b8" stroke="#5d7488" stroke-width="0.6"/></svg>
<div class="t" style="left:124px;top:272.24px;font-size:12px;color:#000;font-weight:normal;">Egyéni nézetek</div>
<svg class="a" style="left:87px;top:293px;" width="10" height="7" viewBox="0 0 10 7"><path d="M1 1L5 5L9 1" stroke="#404040" stroke-width="1.6" fill="none"/></svg>
<svg class="a" style="left:103px;top:288px;" width="17" height="16" viewBox="0 0 17 16"><defs><linearGradient id="fdg" x1="0" y1="0" x2="0" y2="1"><stop offset="0" stop-color="#fdeaa8"/><stop offset="1" stop-color="#f1cd6a"/></linearGradient></defs><path d="M6.5 0.5h7.5v3h-7.5Z" fill="#f6dc8e" stroke="#d9b457" stroke-width="0.6"/><rect x="8" y="1.3" width="4.5" height="1.4" fill="#fff"/><rect x="11" y="1.3" width="1.5" height="1.4" fill="#3a8ee0"/><path d="M0.5 1.5h5.5l1 1.5h7v10H0.5Z" fill="url(#fdg)" stroke="#d9b457" stroke-width="0.7"/><rect x="7" y="7" width="9.5" height="7" fill="#1436c8" stroke="#bbb" stroke-width="0.6"/><path d="M12 8L16 8L16 13Z" fill="#8ab0f0"/><path d="M10 15.5h4" stroke="#666"/></svg>
<div class="t" style="left:124px;top:290.24px;font-size:12px;color:#000;font-weight:normal;">Windows-naplók</div>
<div class="a" style="left:120px;top:305px;width:86px;height:18px;background:#d9d9d9"></div>
<svg class="a" style="left:123px;top:308px;" width="15" height="15" viewBox="0 0 15 15"><rect x="2.5" y="0.5" width="12" height="14" fill="#d6e4f5" stroke="#4d6eaa"/><path d="M4 3h9M4 5.5h9M4 8h9M4 10.5h9M4 13h9" stroke="#f6f9fd" stroke-width="1"/><path d="M0.5 1.5h2.5M0.5 3.5h2.5M0.5 5.5h2.5M0.5 7.5h2.5M0.5 9.5h2.5M0.5 11.5h2.5M0.5 13.5h2.5" stroke="#707070" stroke-width="1"/><path d="M9.5 2.2L12.6 7.6H6.4Z" fill="#f5c518" stroke="#c09000" stroke-width="0.5"/><path d="M9.5 4v2" stroke="#333" stroke-width="1"/><circle cx="7.5" cy="10.8" r="2.7" fill="#dc3a3a"/><path d="M6.4 9.7l2.2 2.2M8.6 9.7l-2.2 2.2" stroke="#fff" stroke-width="0.9"/></svg>
<div class="t" style="left:143px;top:308.24px;font-size:12px;color:#000;font-weight:normal;">Alkalmazás</div>
<svg class="a" style="left:123px;top:326px;" width="15" height="15" viewBox="0 0 15 15"><rect x="2.5" y="0.5" width="12" height="14" fill="#d6e4f5" stroke="#4d6eaa"/><path d="M4 3h9M4 5.5h9M4 8h9M4 10.5h9M4 13h9" stroke="#f6f9fd" stroke-width="1"/><path d="M0.5 1.5h2.5M0.5 3.5h2.5M0.5 5.5h2.5M0.5 7.5h2.5M0.5 9.5h2.5M0.5 11.5h2.5M0.5 13.5h2.5" stroke="#707070" stroke-width="1"/><path d="M9.5 2.2L12.6 7.6H6.4Z" fill="#f5c518" stroke="#c09000" stroke-width="0.5"/><path d="M9.5 4v2" stroke="#333" stroke-width="1"/><circle cx="7.5" cy="10.8" r="2.7" fill="#dc3a3a"/><path d="M6.4 9.7l2.2 2.2M8.6 9.7l-2.2 2.2" stroke="#fff" stroke-width="0.9"/></svg>
<div class="t" style="left:143px;top:326.24px;font-size:12px;color:#000;font-weight:normal;">Biztonság</div>
<svg class="a" style="left:123px;top:344px;" width="15" height="15" viewBox="0 0 15 15"><rect x="2.5" y="0.5" width="12" height="14" fill="#eef4fb" stroke="#4d6eaa"/><path d="M4 3h9M4 5.5h9M4 8h9M4 10.5h9M4 13h9" stroke="#6f92c6" stroke-width="0.9"/><path d="M0.5 1.5h2.5M0.5 3.5h2.5M0.5 5.5h2.5M0.5 7.5h2.5M0.5 9.5h2.5M0.5 11.5h2.5M0.5 13.5h2.5" stroke="#707070" stroke-width="1"/></svg>
<div class="t" style="left:143px;top:344.24px;font-size:12px;color:#000;font-weight:normal;">Telepítés</div>
<svg class="a" style="left:123px;top:362px;" width="15" height="15" viewBox="0 0 15 15"><rect x="2.5" y="0.5" width="12" height="14" fill="#d6e4f5" stroke="#4d6eaa"/><path d="M4 3h9M4 5.5h9M4 8h9M4 10.5h9M4 13h9" stroke="#f6f9fd" stroke-width="1"/><path d="M0.5 1.5h2.5M0.5 3.5h2.5M0.5 5.5h2.5M0.5 7.5h2.5M0.5 9.5h2.5M0.5 11.5h2.5M0.5 13.5h2.5" stroke="#707070" stroke-width="1"/><path d="M9.5 2.2L12.6 7.6H6.4Z" fill="#f5c518" stroke="#c09000" stroke-width="0.5"/><path d="M9.5 4v2" stroke="#333" stroke-width="1"/><circle cx="7.5" cy="10.8" r="2.7" fill="#dc3a3a"/><path d="M6.4 9.7l2.2 2.2M8.6 9.7l-2.2 2.2" stroke="#fff" stroke-width="0.9"/></svg>
<div class="t" style="left:143px;top:362.24px;font-size:12px;color:#000;font-weight:normal;">Rendszer</div>
<svg class="a" style="left:123px;top:380px;" width="15" height="15" viewBox="0 0 15 15"><rect x="2.5" y="0.5" width="12" height="14" fill="#eef4fb" stroke="#4d6eaa"/><path d="M4 3h9M4 5.5h9M4 8h9M4 10.5h9M4 13h9" stroke="#6f92c6" stroke-width="0.9"/><path d="M0.5 1.5h2.5M0.5 3.5h2.5M0.5 5.5h2.5M0.5 7.5h2.5M0.5 9.5h2.5M0.5 11.5h2.5M0.5 13.5h2.5" stroke="#707070" stroke-width="1"/></svg>
<div class="t" style="left:143px;top:380.24px;font-size:12px;color:#000;font-weight:normal;letter-spacing:-0.05px">Továbbított események</div>
<svg class="a" style="left:88px;top:401px;" width="8" height="10" viewBox="0 0 8 10"><path d="M1.5 1L6 5L1.5 9" stroke="#a6a6a6" stroke-width="1.5" fill="none"/></svg>
<svg class="a" style="left:103px;top:396px;" width="17" height="16" viewBox="0 0 17 16"><defs><linearGradient id="fdg" x1="0" y1="0" x2="0" y2="1"><stop offset="0" stop-color="#fdeaa8"/><stop offset="1" stop-color="#f1cd6a"/></linearGradient></defs><path d="M6.5 0.5h7.5v3h-7.5Z" fill="#f6dc8e" stroke="#d9b457" stroke-width="0.6"/><rect x="8" y="1.3" width="4.5" height="1.4" fill="#fff"/><rect x="11" y="1.3" width="1.5" height="1.4" fill="#3a8ee0"/><path d="M0.5 1.5h5.5l1 1.5h7v10H0.5Z" fill="url(#fdg)" stroke="#d9b457" stroke-width="0.7"/><rect x="7" y="9" width="9" height="6" fill="#fff" stroke="#777" stroke-width="0.6"/></svg>
<div class="a" style="left:124px;top:397px;width:151px;height:14px;overflow:hidden"><div class="t" style="left:0;top:0.34px;font-size:12px;color:#000;letter-spacing:-0.15px">Alkalmazás- és szolgáltatásnaplók</div></div>
<svg class="a" style="left:103px;top:414px;" width="17" height="16" viewBox="0 0 17 16"><defs><linearGradient id="fdg" x1="0" y1="0" x2="0" y2="1"><stop offset="0" stop-color="#fdeaa8"/><stop offset="1" stop-color="#f1cd6a"/></linearGradient></defs><path d="M6.5 0.5h7.5v3h-7.5Z" fill="#f6dc8e" stroke="#d9b457" stroke-width="0.6"/><rect x="8" y="1.3" width="4.5" height="1.4" fill="#fff"/><rect x="11" y="1.3" width="1.5" height="1.4" fill="#3a8ee0"/><path d="M0.5 1.5h5.5l1 1.5h7v10H0.5Z" fill="url(#fdg)" stroke="#d9b457" stroke-width="0.7"/><rect x="7" y="8" width="9" height="7" fill="#fff" stroke="#777" stroke-width="0.6"/><path d="M8.5 11l1.5 1.5l2-3" stroke="#3a6fc0" fill="none"/><rect x="13" y="8" width="3" height="2" fill="#d9363e"/></svg>
<div class="t" style="left:124px;top:416.24px;font-size:12px;color:#000;font-weight:normal;">Előfizetések</div>
<div class="a" style="left:80px;top:860px;width:195px;height:17px;background:#f0f0f0"></div>
<div class="a" style="left:98px;top:861px;width:139px;height:15px;background:#cdcdcd"></div>
<svg class="a" style="left:86px;top:864px;" width="6" height="9" viewBox="0 0 6 9"><path d="M5 1L1 4.5L5 8" stroke="#606060" stroke-width="1.3" fill="none"/></svg>
<svg class="a" style="left:262px;top:864px;" width="6" height="9" viewBox="0 0 6 9"><path d="M1 1L5 4.5L1 8" stroke="#606060" stroke-width="1.3" fill="none"/></svg>
<div class="a" style="left:279px;top:249px;width:633px;height:23px;background:#6d6d6d;border-top:1px solid #9a9a9a"></div>
<div class="t" style="left:286px;top:255.74px;font-size:12px;color:#fff;font-weight:bold;letter-spacing:-0.45px">Alkalmazás</div>
<div class="t" style="left:362px;top:255.74px;font-size:12px;color:#fff;font-weight:normal;letter-spacing:-0.3px">Események száma: 633 (!) Új esemény elérhető</div>
<div class="a" style="left:279px;top:273px;width:632px;height:244px;background:#f7f7f7;border-right:1px solid #e6e6e6;border-bottom:1px solid #e6e6e6"></div>
<div class="a" style="left:279px;top:273px;width:631px;height:5px;background:linear-gradient(#8a8a8a 0,#8a8a8a 1px,#a9a9a9 1px,#a9a9a9 3px,#6d6d6d 3px)"></div>
<div class="a" style="left:279px;top:273px;width:5px;height:243px;background:linear-gradient(90deg,#8a8a8a 0,#8a8a8a 1px,#a9a9a9 1px,#a9a9a9 3px,#6d6d6d 3px)"></div>
<div class="a" style="left:283px;top:277px;width:625px;height:237px;background:#fff;border:1px solid #6a6a6a;border-top:none;border-left:none"></div>
<div class="a" style="left:383px;top:279px;width:1px;height:22px;background:#e5e5e5"></div>
<div class="a" style="left:533px;top:279px;width:1px;height:22px;background:#e5e5e5"></div>
<div class="a" style="left:593px;top:279px;width:1px;height:22px;background:#e5e5e5"></div>
<div class="a" style="left:653px;top:279px;width:1px;height:22px;background:#e5e5e5"></div>
<div class="a" style="left:713px;top:279px;width:1px;height:22px;background:#e5e5e5"></div>
<div class="t" style="left:290px;top:284.24px;font-size:12px;color:#000;font-weight:normal;">Szint</div>
<div class="t" style="left:390px;top:284.24px;font-size:12px;color:#000;font-weight:normal;">Dátum és idő</div>
<div class="t" style="left:540px;top:284.24px;font-size:12px;color:#000;font-weight:normal;">Forrás</div>
<div class="t" style="right:1272px;top:284.24px;font-size:12px;color:#000;font-weight:normal;letter-spacing:-0.5px">Esemé...</div>
<div class="t" style="left:660px;top:284.24px;font-size:12px;color:#000;font-weight:normal;">Feladat...</div>
<svg class="a" style="left:288px;top:303px;" width="16" height="16" viewBox="0 0 16 16"><defs><linearGradient id="ig" x1="0" y1="0" x2="1" y2="0.3"><stop offset="0" stop-color="#ffffff"/><stop offset="0.5" stop-color="#e8e8e8"/><stop offset="1" stop-color="#cfcfcf"/></linearGradient><linearGradient id="ib" x1="0" y1="0" x2="0" y2="1"><stop offset="0" stop-color="#0a2a9a"/><stop offset="1" stop-color="#2a5ee8"/></linearGradient></defs><circle cx="8" cy="8" r="7.2" fill="url(#ig)" stroke="#858585" stroke-width="1.3"/><rect x="6.6" y="6.5" width="2.8" height="6.3" fill="url(#ib)"/><rect x="6.6" y="3.3" width="2.8" height="2" fill="#0a1a80"/></svg>
<div class="t" style="left:306px;top:306.24px;font-size:12px;color:#000;font-weight:normal;letter-spacing:-0.15px">Információ</div>
<div class="t" style="left:390px;top:306.24px;font-size:12px;color:#000;font-weight:normal;letter-spacing:-0.55px">2016. 12. 10. 13:01:40</div>
<div class="t" style="left:540px;top:306.24px;font-size:12px;color:#000;font-weight:normal;letter-spacing:-0.2px">SQLBro...</div>
<div class="t" style="right:1272px;top:306.24px;font-size:12px;color:#000;font-weight:normal;letter-spacing:-0.3px">12</div>
<div class="t" style="left:660px;top:306.24px;font-size:12px;color:#000;font-weight:normal;letter-spacing:-0.1px">Nincs</div>
<svg class="a" style="left:288px;top:322px;" width="16" height="16" viewBox="0 0 16 16"><defs><linearGradient id="ig" x1="0" y1="0" x2="1" y2="0.3"><stop offset="0" stop-color="#ffffff"/><stop offset="0.5" stop-color="#e8e8e8"/><stop offset="1" stop-color="#cfcfcf"/></linearGradient><linearGradient id="ib" x1="0" y1="0" x2="0" y2="1"><stop offset="0" stop-color="#0a2a9a"/><stop offset="1" stop-color="#2a5ee8"/></linearGradient></defs><circle cx="8" cy="8" r="7.2" fill="url(#ig)" stroke="#858585" stroke-width="1.3"/><rect x="6.6" y="6.5" width="2.8" height="6.3" fill="url(#ib)"/><rect x="6.6" y="3.3" width="2.8" height="2" fill="#0a1a80"/></svg>
<div class="t" style="left:306px;top:325.24px;font-size:12px;color:#000;font-weight:normal;letter-spacing:-0.15px">Információ</div>
<div class="t" style="left:390px;top:325.24px;font-size:12px;color:#000;font-weight:normal;letter-spacing:-0.55px">2016. 12. 10. 13:01:40</div>
<div class="t" style="left:540px;top:325.24px;font-size:12px;color:#000;font-weight:normal;letter-spacing:-0.2px">SQLBro...</div>
<div class="t" style="right:1272px;top:325.24px;font-size:12px;color:#000;font-weight:normal;letter-spacing:-0.3px">16</div>
<div class="t" style="left:660px;top:325.24px;font-size:12px;color:#000;font-weight:normal;letter-spacing:-0.1px">Nincs</div>
<svg class="a" style="left:288px;top:341px;" width="16" height="16" viewBox="0 0 16 16"><defs><linearGradient id="ig" x1="0" y1="0" x2="1" y2="0.3"><stop offset="0" stop-color="#ffffff"/><stop offset="0.5" stop-color="#e8e8e8"/><stop offset="1" stop-color="#cfcfcf"/></linearGradient><linearGradient id="ib" x1="0" y1="0" x2="0" y2="1"><stop offset="0" stop-color="#0a2a9a"/><stop offset="1" stop-color="#2a5ee8"/></linearGradient></defs><circle cx="8" cy="8" r="7.2" fill="url(#ig)" stroke="#858585" stroke-width="1.3"/><rect x="6.6" y="6.5" width="2.8" height="6.3" fill="url(#ib)"/><rect x="6.6" y="3.3" width="2.8" height="2" fill="#0a1a80"/></svg>
<div class="t" style="left:306px;top:344.24px;font-size:12px;color:#000;font-weight:normal;letter-spacing:-0.15px">Információ</div>
<div class="t" style="left:390px;top:344.24px;font-size:12px;color:#000;font-weight:normal;letter-spacing:-0.55px">2016. 12. 10. 13:01:39</div>
<div class="t" style="left:540px;top:344.24px;font-size:12px;color:#000;font-weight:normal;letter-spacing:-0.2px">Adobe...</div>
<div class="t" style="right:1272px;top:344.24px;font-size:12px;color:#000;font-weight:normal;letter-spacing:-0.3px">0</div>
<div class="t" style="left:660px;top:344.24px;font-size:12px;color:#000;font-weight:normal;letter-spacing:-0.1px">Nincs</div>
<svg class="a" style="left:288px;top:360px;" width="16" height="16" viewBox="0 0 16 16"><defs><linearGradient id="ig" x1="0" y1="0" x2="1" y2="0.3"><stop offset="0" stop-color="#ffffff"/><stop offset="0.5" stop-color="#e8e8e8"/><stop offset="1" stop-color="#cfcfcf"/></linearGradient><linearGradient id="ib" x1="0" y1="0" x2="0" y2="1"><stop offset="0" stop-color="#0a2a9a"/><stop offset="1" stop-color="#2a5ee8"/></linearGradient></defs><circle cx="8" cy="8" r="7.2" fill="url(#ig)" stroke="#858585" stroke-width="1.3"/><rect x="6.6" y="6.5" width="2.8" height="6.3" fill="url(#ib)"/><rect x="6.6" y="3.3" width="2.8" height="2" fill="#0a1a80"/></svg>
<div class="t" style="left:306px;top:363.24px;font-size:12px;color:#000;font-weight:normal;letter-spacing:-0.15px">Információ</div>
<div class="t" style="left:390px;top:363.24px;font-size:12px;color:#000;font-weight:normal;letter-spacing:-0.55px">2016. 12. 10. 13:01:31</div>
<div class="t" style="left:540px;top:363.24px;font-size:12px;color:#000;font-weight:normal;letter-spacing:-0.2px">User Pr...</div>
<div class="t" style="right:1272px;top:363.24px;font-size:12px;color:#000;font-weight:normal;letter-spacing:-0.3px">1531</div>
<div class="t" style="left:660px;top:363.24px;font-size:12px;color:#000;font-weight:normal;letter-spacing:-0.1px">Nincs</div>
<div class="a" style="left:303px;top:378px;width:411px;height:19px;background:#0078d7;border:1px dotted #f08a30"></div>
<svg class="a" style="left:288px;top:379px;" width="16" height="16" viewBox="0 0 16 16"><defs><linearGradient id="ig" x1="0" y1="0" x2="1" y2="0.3"><stop offset="0" stop-color="#ffffff"/><stop offset="0.5" stop-color="#e8e8e8"/><stop offset="1" stop-color="#cfcfcf"/></linearGradient><linearGradient id="ib" x1="0" y1="0" x2="0" y2="1"><stop offset="0" stop-color="#0a2a9a"/><stop offset="1" stop-color="#2a5ee8"/></linearGradient></defs><circle cx="8" cy="8" r="7.2" fill="#80b8ea" stroke="#3d7bb8" stroke-width="1.3"/><rect x="6.6" y="6.5" width="2.8" height="6.3" fill="#0a48d0"/><rect x="6.6" y="3.3" width="2.8" height="2" fill="#0a2aa0"/></svg>
<div class="t" style="left:306px;top:382.24px;font-size:12px;color:#fff;font-weight:normal;letter-spacing:-0.15px">Információ</div>
<div class="t" style="left:390px;top:382.24px;font-size:12px;color:#fff;font-weight:normal;letter-spacing:-0.55px">2016. 12. 10. 13:01:31</div>
<div class="t" style="left:540px;top:382.24px;font-size:12px;color:#fff;font-weight:normal;letter-spacing:-0.2px">EventS...</div>
<div class="t" style="right:1272px;top:382.24px;font-size:12px;color:#fff;font-weight:normal;letter-spacing:-0.3px">4625</div>
<div class="t" style="left:660px;top:382.24px;font-size:12px;color:#fff;font-weight:normal;letter-spacing:-0.1px">Nincs</div>
<svg class="a" style="left:288px;top:398px;" width="16" height="16" viewBox="0 0 16 16"><defs><linearGradient id="ig" x1="0" y1="0" x2="1" y2="0.3"><stop offset="0" stop-color="#ffffff"/><stop offset="0.5" stop-color="#e8e8e8"/><stop offset="1" stop-color="#cfcfcf"/></linearGradient><linearGradient id="ib" x1="0" y1="0" x2="0" y2="1"><stop offset="0" stop-color="#0a2a9a"/><stop offset="1" stop-color="#2a5ee8"/></linearGradient></defs><circle cx="8" cy="8" r="7.2" fill="url(#ig)" stroke="#858585" stroke-width="1.3"/><rect x="6.6" y="6.5" width="2.8" height="6.3" fill="url(#ib)"/><rect x="6.6" y="3.3" width="2.8" height="2" fill="#0a1a80"/></svg>
<div class="t" style="left:306px;top:401.24px;font-size:12px;color:#000;font-weight:normal;letter-spacing:-0.15px">Információ</div>
<div class="t" style="left:390px;top:401.24px;font-size:12px;color:#000;font-weight:normal;letter-spacing:-0.55px">2016. 12. 09. 17:52:32</div>
<div class="t" style="left:540px;top:401.24px;font-size:12px;color:#000;font-weight:normal;letter-spacing:-0.2px">LoadPerf</div>
<div class="t" style="right:1272px;top:401.24px;font-size:12px;color:#000;font-weight:normal;letter-spacing:-0.3px">1000</div>
<div class="t" style="left:660px;top:401.24px;font-size:12px;color:#000;font-weight:normal;letter-spacing:-0.1px">Nincs</div>
<svg class="a" style="left:288px;top:417px;" width="16" height="16" viewBox="0 0 16 16"><defs><linearGradient id="ig" x1="0" y1="0" x2="1" y2="0.3"><stop offset="0" stop-color="#ffffff"/><stop offset="0.5" stop-color="#e8e8e8"/><stop offset="1" stop-color="#cfcfcf"/></linearGradient><linearGradient id="ib" x1="0" y1="0" x2="0" y2="1"><stop offset="0" stop-color="#0a2a9a"/><stop offset="1" stop-color="#2a5ee8"/></linearGradient></defs><circle cx="8" cy="8" r="7.2" fill="url(#ig)" stroke="#858585" stroke-width="1.3"/><rect x="6.6" y="6.5" width="2.8" height="6.3" fill="url(#ib)"/><rect x="6.6" y="3.3" width="2.8" height="2" fill="#0a1a80"/></svg>
<div class="t" style="left:306px;top:420.24px;font-size:12px;color:#000;font-weight:normal;letter-spacing:-0.15px">Információ</div>
<div class="t" style="left:390px;top:420.24px;font-size:12px;color:#000;font-weight:normal;letter-spacing:-0.55px">2016. 12. 09. 17:51:28</div>
<div class="t" style="left:540px;top:420.24px;font-size:12px;color:#000;font-weight:normal;letter-spacing:-0.2px">Securit...</div>
<div class="t" style="right:1272px;top:420.24px;font-size:12px;color:#000;font-weight:normal;letter-spacing:-0.3px">903</div>
<div class="t" style="left:660px;top:420.24px;font-size:12px;color:#000;font-weight:normal;letter-spacing:-0.1px">Nincs</div>
<svg class="a" style="left:288px;top:436px;" width="16" height="16" viewBox="0 0 16 16"><defs><linearGradient id="ig" x1="0" y1="0" x2="1" y2="0.3"><stop offset="0" stop-color="#ffffff"/><stop offset="0.5" stop-color="#e8e8e8"/><stop offset="1" stop-color="#cfcfcf"/></linearGradient><linearGradient id="ib" x1="0" y1="0" x2="0" y2="1"><stop offset="0" stop-color="#0a2a9a"/><stop offset="1" stop-color="#2a5ee8"/></linearGradient></defs><circle cx="8" cy="8" r="7.2" fill="url(#ig)" stroke="#858585" stroke-width="1.3"/><rect x="6.6" y="6.5" width="2.8" height="6.3" fill="url(#ib)"/><rect x="6.6" y="3.3" width="2.8" height="2" fill="#0a1a80"/></svg>
<div class="t" style="left:306px;top:439.24px;font-size:12px;color:#000;font-weight:normal;letter-spacing:-0.15px">Információ</div>
<div class="t" style="left:390px;top:439.24px;font-size:12px;color:#000;font-weight:normal;letter-spacing:-0.55px">2016. 12. 09. 17:51:28</div>
<div class="t" style="left:540px;top:439.24px;font-size:12px;color:#000;font-weight:normal;letter-spacing:-0.2px">Securit...</div>
<div class="t" style="right:1272px;top:439.24px;font-size:12px;color:#000;font-weight:normal;letter-spacing:-0.3px">16384</div>
<div class="t" style="left:660px;top:439.24px;font-size:12px;color:#000;font-weight:normal;letter-spacing:-0.1px">Nincs</div>
<svg class="a" style="left:288px;top:455px;" width="16" height="16" viewBox="0 0 16 16"><defs><linearGradient id="ig" x1="0" y1="0" x2="1" y2="0.3"><stop offset="0" stop-color="#ffffff"/><stop offset="0.5" stop-color="#e8e8e8"/><stop offset="1" stop-color="#cfcfcf"/></linearGradient><linearGradient id="ib" x1="0" y1="0" x2="0" y2="1"><stop offset="0" stop-color="#0a2a9a"/><stop offset="1" stop-color="#2a5ee8"/></linearGradient></defs><circle cx="8" cy="8" r="7.2" fill="url(#ig)" stroke="#858585" stroke-width="1.3"/><rect x="6.6" y="6.5" width="2.8" height="6.3" fill="url(#ib)"/><rect x="6.6" y="3.3" width="2.8" height="2" fill="#0a1a80"/></svg>
<div class="t" style="left:306px;top:458.24px;font-size:12px;color:#000;font-weight:normal;letter-spacing:-0.15px">Információ</div>
<div class="t" style="left:390px;top:458.24px;font-size:12px;color:#000;font-weight:normal;letter-spacing:-0.55px">2016. 12. 09. 17:51:17</div>
<div class="t" style="left:540px;top:458.24px;font-size:12px;color:#000;font-weight:normal;letter-spacing:-0.2px">Securit...</div>
<div class="t" style="right:1272px;top:458.24px;font-size:12px;color:#000;font-weight:normal;letter-spacing:-0.3px">15</div>
<div class="t" style="left:660px;top:458.24px;font-size:12px;color:#000;font-weight:normal;letter-spacing:-0.1px">Nincs</div>
<svg class="a" style="left:288px;top:474px;" width="16" height="16" viewBox="0 0 16 16"><defs><linearGradient id="ig" x1="0" y1="0" x2="1" y2="0.3"><stop offset="0" stop-color="#ffffff"/><stop offset="0.5" stop-color="#e8e8e8"/><stop offset="1" stop-color="#cfcfcf"/></linearGradient><linearGradient id="ib" x1="0" y1="0" x2="0" y2="1"><stop offset="0" stop-color="#0a2a9a"/><stop offset="1" stop-color="#2a5ee8"/></linearGradient></defs><circle cx="8" cy="8" r="7.2" fill="url(#ig)" stroke="#858585" stroke-width="1.3"/><rect x="6.6" y="6.5" width="2.8" height="6.3" fill="url(#ib)"/><rect x="6.6" y="3.3" width="2.8" height="2" fill="#0a1a80"/></svg>
<div class="t" style="left:306px;top:477.24px;font-size:12px;color:#000;font-weight:normal;letter-spacing:-0.15px">Információ</div>
<div class="t" style="left:390px;top:477.24px;font-size:12px;color:#000;font-weight:normal;letter-spacing:-0.55px">2016. 12. 09. 17:51:17</div>
<div class="t" style="left:540px;top:477.24px;font-size:12px;color:#000;font-weight:normal;letter-spacing:-0.2px">Securit...</div>
<div class="t" style="right:1272px;top:477.24px;font-size:12px;color:#000;font-weight:normal;letter-spacing:-0.3px">15</div>
<div class="t" style="left:660px;top:477.24px;font-size:12px;color:#000;font-weight:normal;letter-spacing:-0.1px">Nincs</div>
<svg class="a" style="left:288px;top:493px;" width="16" height="16" viewBox="0 0 16 16"><defs><linearGradient id="ig" x1="0" y1="0" x2="1" y2="0.3"><stop offset="0" stop-color="#ffffff"/><stop offset="0.5" stop-color="#e8e8e8"/><stop offset="1" stop-color="#cfcfcf"/></linearGradient><linearGradient id="ib" x1="0" y1="0" x2="0" y2="1"><stop offset="0" stop-color="#0a2a9a"/><stop offset="1" stop-color="#2a5ee8"/></linearGradient></defs><circle cx="8" cy="8" r="7.2" fill="url(#ig)" stroke="#858585" stroke-width="1.3"/><rect x="6.6" y="6.5" width="2.8" height="6.3" fill="url(#ib)"/><rect x="6.6" y="3.3" width="2.8" height="2" fill="#0a1a80"/></svg>
<div class="t" style="left:306px;top:496.24px;font-size:12px;color:#000;font-weight:normal;letter-spacing:-0.15px">Információ</div>
<div class="t" style="left:390px;top:496.24px;font-size:12px;color:#000;font-weight:normal;letter-spacing:-0.55px">2016. 12. 09. 17:51:13</div>
<div class="t" style="left:540px;top:496.24px;font-size:12px;color:#000;font-weight:normal;letter-spacing:-0.2px">Search</div>
<div class="t" style="right:1272px;top:496.24px;font-size:12px;color:#000;font-weight:normal;letter-spacing:-0.3px">1003</div>
<div class="t" style="left:660px;top:496.24px;font-size:12px;color:#000;font-weight:normal;letter-spacing:-0.1px">Keresés...</div>
<div class="a" style="left:288px;top:510px;width:16px;height:3px;overflow:hidden"><svg width="16" height="16"><circle cx="8" cy="8" r="7.3" fill="#eee" stroke="#7a7a7a" stroke-width="1.2"/></svg></div>
<div class="a" style="left:891px;top:278px;width:16px;height:235px;background:#f5f5f5"></div>
<svg class="a" style="left:894px;top:284px;" width="11" height="7" viewBox="0 0 11 7"><path d="M1 6L5.5 1.5L10 6" stroke="#606060" stroke-width="1.3" fill="none"/></svg>
<div class="a" style="left:892px;top:313px;width:15px;height:17px;background:#cdcdcd"></div>
<svg class="a" style="left:894px;top:500px;" width="11" height="7" viewBox="0 0 11 7"><path d="M1 1L5.5 5.5L10 1" stroke="#606060" stroke-width="1.3" fill="none"/></svg>
<div class="a" style="left:279px;top:519px;width:632px;height:360px;background:#f6f6f6;border-right:1px solid #e3e3e3;border-bottom:1px solid #dcdcdc"></div>
<div class="a" style="left:279px;top:519px;width:630px;height:2px;background:#6a6a6a"></div>
<div class="a" style="left:279px;top:519px;width:5px;height:358px;background:linear-gradient(90deg,#8a8a8a 0,#8a8a8a 1px,#a9a9a9 1px,#a9a9a9 3px,#6d6d6d 3px)"></div>
<div class="a" style="left:283px;top:876px;width:625px;height:1px;background:#e8e8e8"></div>
<div class="t" style="left:290px;top:525.74px;font-size:12px;color:#000;font-weight:normal;letter-spacing:-0.45px">Esemény 4625, EventSystem</div>
<svg class="a" style="left:887px;top:525px;" width="10" height="10" viewBox="0 0 10 10"><path d="M1.5 1.5L8.5 8.5M8.5 1.5L1.5 8.5" stroke="#000" stroke-width="2.2"/></svg>
<div class="a" style="left:286px;top:541px;width:619px;height:2px;background:#9a9a9a"></div>
<div class="a" style="left:292px;top:571px;width:606px;height:295px;background:#f7f7f7;border:1px solid #d9d9d9"></div>
<div class="a" style="left:355px;top:551px;width:57px;height:21px;background:#f0f0f0;border:1px solid #d9d9d9;border-bottom:none"></div>
<div class="a" style="left:292px;top:549px;width:64px;height:24px;background:#fff;border:1px solid #d9d9d9;border-bottom:none"></div>
<div class="t" style="left:299px;top:554.24px;font-size:12px;color:#000;font-weight:normal;">Általános</div>
<div class="t" style="left:360px;top:556.24px;font-size:12px;color:#000;font-weight:normal;letter-spacing:-0.5px">Részletek</div>
<div class="a" style="left:306px;top:588px;width:559px;height:73px;background:#f9f9f9;border-top:2px solid #6e6e6e;border-left:2px solid #6e6e6e;border-right:1px solid #e0e0e0;border-bottom:1px solid #e0e0e0"></div>
<div class="t" style="left:309px;top:592.94px;font-size:12px;color:#000;font-weight:normal;letter-spacing:-0.15px">Az EventSystem alrendszer 86400 másodpercre letiltja az eseménynapló ismétlődő bejegyzéseit. A letiltási</div>
<div class="t" style="left:309px;top:608.04px;font-size:12px;color:#000;font-weight:normal;letter-spacing:-0.15px">időkorlát a REG_DWORD érték SuppressDuplicateDuration azonosítóval vezérelhető a következő</div>
<div class="t" style="left:309px;top:623.24px;font-size:12px;color:#000;font-weight:normal;letter-spacing:-0.15px">beállításkulcsban: HKLM\Software\Microsoft\EventSystem\EventLog\</div>
<div class="t" style="left:304px;top:679.24px;font-size:12px;color:#000;font-weight:normal;letter-spacing:-0.2px">Naplónév:</div>
<div class="t" style="left:420px;top:679.24px;font-size:12px;color:#000;font-weight:normal;letter-spacing:-0.2px">Alkalmazás</div>
<div class="t" style="left:304px;top:703.24px;font-size:12px;color:#000;font-weight:normal;letter-spacing:-0.2px">Forrás:</div>
<div class="t" style="left:420px;top:703.24px;font-size:12px;color:#000;font-weight:normal;letter-spacing:-0.2px">EventSystem</div>
<div class="t" style="left:578px;top:703.24px;font-size:12px;color:#000;font-weight:normal;letter-spacing:-0.2px">Naplózva:</div>
<div class="t" style="left:678px;top:703.24px;font-size:12px;color:#000;font-weight:normal;letter-spacing:-0.35px">2016. 12. 10. 13:01:31</div>
<div class="t" style="left:304px;top:727.24px;font-size:12px;color:#000;font-weight:normal;letter-spacing:-0.2px">Eseményazonosító:</div>
<div class="t" style="left:420px;top:727.24px;font-size:12px;color:#000;font-weight:normal;letter-spacing:-0.2px">4625</div>
<div class="t" style="left:578px;top:727.24px;font-size:12px;color:#000;font-weight:normal;letter-spacing:-0.2px">Feladatkategória:</div>
<div class="t" style="left:678px;top:727.24px;font-size:12px;color:#000;font-weight:normal;letter-spacing:-0.35px">Nincs</div>
<div class="t" style="left:304px;top:751.24px;font-size:12px;color:#000;font-weight:normal;letter-spacing:-0.2px">Szint:</div>
<div class="t" style="left:420px;top:751.24px;font-size:12px;color:#000;font-weight:normal;letter-spacing:-0.2px">Információ</div>
<div class="t" style="left:578px;top:751.24px;font-size:12px;color:#000;font-weight:normal;letter-spacing:-0.2px">Kulcsszó:</div>
<div class="t" style="left:678px;top:751.24px;font-size:12px;color:#000;font-weight:normal;letter-spacing:-0.35px">Klasszikus</div>
<div class="t" style="left:304px;top:775.24px;font-size:12px;color:#000;font-weight:normal;letter-spacing:-0.2px">Felhasználó:</div>
<div class="t" style="left:420px;top:775.24px;font-size:12px;color:#000;font-weight:normal;letter-spacing:-0.2px">n.a.</div>
<div class="t" style="left:578px;top:775.24px;font-size:12px;color:#000;font-weight:normal;letter-spacing:-0.2px">Számítógép:</div>
<div class="t" style="left:678px;top:775.24px;font-size:12px;color:#000;font-weight:normal;letter-spacing:-0.35px">ETIT-TEMPLATE</div>
<div class="t" style="left:304px;top:799.24px;font-size:12px;color:#000;font-weight:normal;letter-spacing:-0.2px">OpCode:</div>
<div class="t" style="left:420px;top:799.24px;font-size:12px;color:#000;font-weight:normal;letter-spacing:-0.2px">Információ</div>
<div class="t" style="left:304px;top:823.24px;font-size:12px;color:#000;font-weight:normal;letter-spacing:-0.2px">További információ:</div>
<div class="t" style="left:423px;top:823.24px;font-size:12px;color:#0a3fe0;font-weight:normal;letter-spacing:-0.2px;text-decoration:underline">Online súgó</div>
<div class="a" style="left:915px;top:249px;width:188px;height:629px;background:#fff;border-left:2px solid #8c8c8c;border-top:2px solid #8c8c8c"></div>
<div class="a" style="left:917px;top:251px;width:186px;height:20px;background:#f5f5f5"></div>
<div class="t" style="left:922px;top:256.24px;font-size:12px;color:#000;font-weight:bold;letter-spacing:0.1px">Műveletek</div>
<div class="a" style="left:917px;top:271px;width:186px;height:1px;background:#a0a0a0"></div>
<div class="a" style="left:917px;top:272px;width:185px;height:26px;background:linear-gradient(#c3d7ee,#a3bee0)"></div>
<div class="t" style="left:924px;top:280.24px;font-size:12px;color:#000;font-weight:normal;">Alkalmazás</div>
<svg class="a" style="left:1085px;top:283px;" width="10" height="6" viewBox="0 0 10 6"><path d="M0 6L5 0.5L10 6Z" fill="#000"/></svg>
<svg class="a" style="left:922px;top:302px;" width="16" height="16" viewBox="0 0 16 16"><path d="M1 5h5l1 1h7v8H1Z" fill="#e0bc5c" stroke="#a08030" stroke-width="0.6"/><path d="M2.5 8h13l-2 6H1Z" fill="#f6da8a" stroke="#b8953a" stroke-width="0.6"/><path d="M11 1h3" stroke="#2aa82a"/></svg>
<div class="t" style="left:948px;top:305.04px;font-size:12px;color:#000;font-weight:normal;letter-spacing:-0.25px">Naplófájl megnyitása...</div>
<svg class="a" style="left:922px;top:326px;" width="16" height="16" viewBox="0 0 16 16"><path d="M1 2h14L9.5 8v7L6.5 13V8Z" fill="#9fb2c4" stroke="#6d8092" stroke-width="0.6"/><circle cx="5" cy="4" r="3.5" fill="#ffa51f"/></svg>
<div class="t" style="left:948px;top:329.04px;font-size:12px;color:#000;font-weight:normal;letter-spacing:-0.25px">Egyéni nézet létrehozá...</div>
<div class="t" style="left:948px;top:353.04px;font-size:12px;color:#000;font-weight:normal;letter-spacing:-0.25px">Egyéni nézet importálá...</div>
<div class="t" style="left:948px;top:378.04px;font-size:12px;color:#000;font-weight:normal;letter-spacing:-0.25px">Napló törlése...</div>
<svg class="a" style="left:922px;top:399px;" width="16" height="16" viewBox="0 0 16 16"><path d="M1 2h14L9.5 8v7L6.5 13V8Z" fill="#8ea8bf" stroke="#5d7a92" stroke-width="0.6"/><path d="M3 3h10" stroke="#d8e6f2"/></svg>
<div class="t" style="left:948px;top:402.04px;font-size:12px;color:#000;font-weight:normal;letter-spacing:-0.25px">Jelenlegi napló szűrése...</div>
<svg class="a" style="left:922px;top:423px;" width="16" height="16" viewBox="0 0 16 16"><rect x="1.5" y="1.5" width="13" height="13" rx="1" fill="#eef2f7" stroke="#8a96a6"/><path d="M4 5h8M5 7.5h6M5 10h6" stroke="#7d95b8"/><path d="M6 14h4" stroke="#1e90ff" stroke-width="1.5"/></svg>
<div class="t" style="left:948px;top:426.04px;font-size:12px;color:#000;font-weight:normal;letter-spacing:-0.25px">Tulajdonságok</div>
<svg class="a" style="left:922px;top:447px;" width="16" height="16" viewBox="0 0 16 16"><rect x="1" y="2" width="6" height="9" rx="2" fill="#6d7d90"/><rect x="9" y="2" width="6" height="9" rx="2" fill="#6d7d90"/><circle cx="4" cy="12" r="2.5" fill="#9cc8ef" stroke="#3a6fc0"/><circle cx="12" cy="12" r="2.5" fill="#9cc8ef" stroke="#3a6fc0"/></svg>
<div class="t" style="left:948px;top:450.04px;font-size:12px;color:#000;font-weight:normal;letter-spacing:-0.25px">Keresés...</div>
<svg class="a" style="left:922px;top:471px;" width="16" height="16" viewBox="0 0 16 16"><path d="M1.5 1.5h11.5l1.5 1.5v11.5h-13Z" fill="#262626"/><rect x="3.5" y="1.5" width="9" height="6.5" fill="#f2f2f2"/><rect x="4.5" y="10.5" width="7" height="4" fill="#7a7a7a"/><rect x="9.5" y="11" width="1.5" height="3" fill="#262626"/></svg>
<div class="t" style="left:948px;top:474.04px;font-size:12px;color:#000;font-weight:normal;letter-spacing:-0.25px">Események mentése m...</div>
<div class="t" style="left:948px;top:498.04px;font-size:12px;color:#000;font-weight:normal;letter-spacing:-0.25px">Feladat csatolása az es...</div>
<div class="t" style="left:948px;top:522.04px;font-size:12px;color:#000;font-weight:normal;letter-spacing:-0.25px">Nézet</div>
<svg class="a" style="left:1088px;top:522px;" width="6" height="10" viewBox="0 0 6 10"><path d="M0 0L6 5L0 10Z" fill="#000"/></svg>
<svg class="a" style="left:922px;top:544px;" width="16" height="16" viewBox="0 0 16 16"><path d="M2.5 0.5h8.5l2.5 2.5v12.5h-11Z" fill="#fff" stroke="#8a8a8a"/><path d="M11 9.5A3.3 3.3 0 1 1 9.5 5.7" stroke="#22b02a" stroke-width="1.9" fill="none"/><path d="M8.3 8.5L12.3 11L12.3 7Z" fill="#22b02a"/></svg>
<div class="t" style="left:948px;top:547.04px;font-size:12px;color:#000;font-weight:normal;letter-spacing:-0.25px">Frissítés</div>
<svg class="a" style="left:922px;top:569px;" width="16" height="16" viewBox="0 0 16 16"><rect x="5" y="0.5" width="12.5" height="15.5" transform="translate(-0.5,0)" fill="#4a70d8" stroke="#1e3590"/><rect x="4.5" y="1" width="2.5" height="14.5" fill="#2a48b0"/><text x="8" y="13" font-size="12" fill="#fff" font-family="Liberation Sans" font-weight="bold">?</text></svg>
<div class="t" style="left:948px;top:572.04px;font-size:12px;color:#000;font-weight:normal;letter-spacing:-0.25px">Súgó</div>
<svg class="a" style="left:1088px;top:572px;" width="6" height="10" viewBox="0 0 6 10"><path d="M0 0L6 5L0 10Z" fill="#000"/></svg>
<svg class="a" style="left:922px;top:624px;" width="16" height="16" viewBox="0 0 16 16"><rect x="1.5" y="1.5" width="13" height="13" rx="1" fill="#eef2f7" stroke="#8a96a6"/><path d="M4 5h8M5 7.5h6M5 10h6" stroke="#7d95b8"/><path d="M6 14h4" stroke="#1e90ff" stroke-width="1.5"/></svg>
<div class="t" style="left:948px;top:627.04px;font-size:12px;color:#000;font-weight:normal;letter-spacing:-0.25px">Esemény tulajdonságai</div>
<svg class="a" style="left:922px;top:648px;" width="16" height="16" viewBox="0 0 16 16"><rect x="2.5" y="2.5" width="12" height="13" fill="#f4f0e6" stroke="#8a8a8a"/><circle cx="9" cy="9" r="4" fill="#fff" stroke="#555"/><path d="M9 6.5v2.5h2" stroke="#333" fill="none"/><circle cx="3" cy="3" r="2.5" fill="#ffb400"/></svg>
<div class="t" style="left:948px;top:651.04px;font-size:12px;color:#000;font-weight:normal;letter-spacing:-0.25px">Feladat csatolása az es...</div>
<svg class="a" style="left:922px;top:672px;" width="16" height="16" viewBox="0 0 16 16"><rect x="1.5" y="1.5" width="8" height="10" fill="#fff" stroke="#8a96a6"/><rect x="6.5" y="5.5" width="8" height="10" fill="#fff" stroke="#8a96a6"/><path d="M3 4h5M3 6h5M8 8h5M8 10h5M8 12h5" stroke="#7d95b8" stroke-width="0.7"/></svg>
<div class="t" style="left:948px;top:675.04px;font-size:12px;color:#000;font-weight:normal;letter-spacing:-0.25px">Másolás</div>
<svg class="a" style="left:1088px;top:675px;" width="6" height="10" viewBox="0 0 6 10"><path d="M0 0L6 5L0 10Z" fill="#000"/></svg>
<svg class="a" style="left:922px;top:696px;" width="16" height="16" viewBox="0 0 16 16"><path d="M1.5 1.5h11.5l1.5 1.5v11.5h-13Z" fill="#262626"/><rect x="3.5" y="1.5" width="9" height="6.5" fill="#f2f2f2"/><rect x="4.5" y="10.5" width="7" height="4" fill="#7a7a7a"/><rect x="9.5" y="11" width="1.5" height="3" fill="#262626"/></svg>
<div class="t" style="left:948px;top:699.04px;font-size:12px;color:#000;font-weight:normal;letter-spacing:-0.25px">Kijelölt esemény(ek) m...</div>
<svg class="a" style="left:922px;top:720px;" width="16" height="16" viewBox="0 0 16 16"><path d="M2.5 0.5h8.5l2.5 2.5v12.5h-11Z" fill="#fff" stroke="#8a8a8a"/><path d="M11 9.5A3.3 3.3 0 1 1 9.5 5.7" stroke="#22b02a" stroke-width="1.9" fill="none"/><path d="M8.3 8.5L12.3 11L12.3 7Z" fill="#22b02a"/></svg>
<div class="t" style="left:948px;top:723.04px;font-size:12px;color:#000;font-weight:normal;letter-spacing:-0.25px">Frissítés</div>
<svg class="a" style="left:922px;top:745px;" width="16" height="16" viewBox="0 0 16 16"><rect x="5" y="0.5" width="12.5" height="15.5" transform="translate(-0.5,0)" fill="#4a70d8" stroke="#1e3590"/><rect x="4.5" y="1" width="2.5" height="14.5" fill="#2a48b0"/><text x="8" y="13" font-size="12" fill="#fff" font-family="Liberation Sans" font-weight="bold">?</text></svg>
<div class="t" style="left:948px;top:748.04px;font-size:12px;color:#000;font-weight:normal;letter-spacing:-0.25px">Súgó</div>
<svg class="a" style="left:1088px;top:748px;" width="6" height="10" viewBox="0 0 6 10"><path d="M0 0L6 5L0 10Z" fill="#000"/></svg>
<div class="a" style="left:922px;top:370px;width:174px;height:1px;background:#ececec"></div>
<div class="a" style="left:922px;top:515px;width:174px;height:1px;background:#ececec"></div>
<div class="a" style="left:922px;top:540px;width:174px;height:1px;background:#ececec"></div>
<div class="a" style="left:922px;top:565px;width:174px;height:1px;background:#ececec"></div>
<div class="a" style="left:922px;top:716px;width:174px;height:1px;background:#ececec"></div>
<div class="a" style="left:922px;top:741px;width:174px;height:1px;background:#ececec"></div>
<div class="a" style="left:917px;top:596px;width:185px;height:24px;background:linear-gradient(#c3d7ee,#a3bee0)"></div>
<div class="t" style="left:924px;top:602.24px;font-size:12px;color:#000;font-weight:normal;letter-spacing:-0.2px">Esemény 4625, EventSystem</div>
<svg class="a" style="left:1085px;top:605px;" width="10" height="6" viewBox="0 0 10 6"><path d="M0 6L5 0.5L10 6Z" fill="#000"/></svg>
<div class="a" style="left:79px;top:880px;width:1024px;height:22px;background:#f5f5f5"></div>
<div class="a" style="left:882px;top:880px;width:1px;height:22px;background:#dadada"></div>
<div class="a" style="left:1015px;top:880px;width:1px;height:22px;background:#dadada"></div>
<div class="a" style="left:20px;top:902px;width:1143px;height:40px;background:#000"></div>
<svg class="a" style="left:94px;top:914px;" width="17" height="17" viewBox="0 0 17 17"><path d="M0 2.3L7 1.3V8H0Z M8 1.2L17 0V8H8Z M0 9H7V15.7L0 14.7Z M8 9H17V17L8 15.8Z" fill="#fff"/></svg>
<svg class="a" style="left:143px;top:913px;" width="18" height="18" viewBox="0 0 18 18"><circle cx="11" cy="7" r="5.5" fill="none" stroke="#fff" stroke-width="1.4"/><path d="M7 11L1 17" stroke="#fff" stroke-width="1.6"/></svg>
<svg class="a" style="left:189px;top:914px;" width="21" height="17" viewBox="0 0 21 17"><rect x="4.5" y="1.5" width="12" height="14" fill="none" stroke="#fff" stroke-width="1.3"/><path d="M2 3.5h-1v10h1M19 3.5h1v10h-1" stroke="#fff" stroke-width="1.3" fill="none"/></svg>
<svg class="a" style="left:239px;top:912px;" width="22" height="20" viewBox="0 0 22 20"><path d="M1 1.5h7l1.5 1.5H21V19H1Z" fill="#f2cf6e"/><path d="M1 4h20v15H1Z" fill="#fbe59e" stroke="#e9c566" stroke-width="0.6"/><path d="M6 19.5V11.5h11V19.5H13.5V15H9.5V19.5Z" fill="#2ea6ea"/><rect x="2" y="2" width="4" height="1.2" fill="#6ab0e0"/></svg>
<svg class="a" style="left:287px;top:910px;" width="24" height="24" viewBox="0 0 24 24"><defs><radialGradient id="ffg" cx="0.6" cy="0.35" r="0.6"><stop offset="0" stop-color="#3aa0f0"/><stop offset="1" stop-color="#0d3b8f"/></radialGradient><linearGradient id="ffo" x1="0" y1="0" x2="0.3" y2="1"><stop offset="0" stop-color="#ffb020"/><stop offset="0.6" stop-color="#f05a18"/><stop offset="1" stop-color="#d8381a"/></linearGradient></defs><circle cx="13" cy="11" r="9" fill="url(#ffg)"/><path d="M5 4C2 7 1 12 2.5 16C4.5 21 10 23.5 15 22.5C19.5 21.5 22.5 17.5 22.8 13C21.5 16.5 18 19 14 18.8C10 18.5 7.5 15.5 8 12.5C7 12.5 5.8 11.5 6.2 10C5 9.5 4.5 8 5.2 6.5C5 5.5 5 4.8 5 4Z" fill="url(#ffo)"/><path d="M13 2C16 1.5 19 3 20 5C18 4 16 4 14.5 5Z" fill="#ffb020"/></svg>
<svg class="a" style="left:336px;top:910px;" width="24" height="24" viewBox="0 0 24 24"><rect x="1" y="1" width="22" height="22" rx="2" fill="#2a4ad8" stroke="#1a2f90"/><rect x="6" y="1" width="11" height="8" fill="#cfd8f0"/><rect x="12" y="2.5" width="3" height="5" fill="#2a4ad8"/><rect x="4" y="11" width="16" height="11" fill="#fff"/><path d="M5 13.5h14M5 16h14M5 18.5h14" stroke="#e07070"/></svg>
<svg class="a" style="left:384px;top:909px;" width="25" height="25" viewBox="0 0 25 25"><defs><linearGradient id="rdg" x1="0" y1="0" x2="1" y2="1"><stop offset="0" stop-color="#1a3fb8"/><stop offset="1" stop-color="#7aa8f0"/></linearGradient></defs><path d="M4 1L23 3V18L4 20Z" fill="#d8dde6" stroke="#9aa4b4" stroke-width="0.6"/><path d="M6 3.5L21 5V16.5L6 18Z" fill="url(#rdg)"/><rect x="1" y="6" width="16" height="5" fill="#5d9be8" stroke="#cfe0f8" stroke-width="0.8"/><path d="M3 8.5h1.5M6 8.5h1.5M9 8.5h1.5M12 8.5h1.5" stroke="#fff" stroke-width="1.2"/><path d="M13 20v2" stroke="#bbb" stroke-width="2"/><ellipse cx="13" cy="23" rx="5.5" ry="1.6" fill="#d0d0d0"/></svg>
<svg class="a" style="left:434px;top:910px;" width="24" height="24" viewBox="0 0 24 24"><rect x="8" y="3" width="15" height="18" fill="#fff" stroke="#1e7145"/><path d="M12 7h9M12 10h9M12 13h9M12 16h9M16 3v18" stroke="#1e7145" stroke-width="0.8"/><path d="M0 3L13 1V23L0 21Z" fill="#1e7145"/><text x="2.5" y="16" font-size="11" fill="#fff" font-family="Liberation Sans" font-weight="bold">X</text></svg>
<div class="a" style="left:471px;top:902px;width:48px;height:40px;background:#1d1d24"></div>
<div class="a" style="left:471px;top:939px;width:48px;height:3px;background:#76b9ed"></div>
<svg class="a" style="left:484px;top:911px;" width="20" height="22" viewBox="0 0 20 22"><path d="M3 1h13v18H3Z" fill="#a8bedc" stroke="#5d7aa5"/><path d="M1 3h3M1 6h3M1 9h3M1 12h3M1 15h3" stroke="#888"/><path d="M5 5h9M5 8h9M5 11h9M5 14h9" stroke="#7d9bc8" stroke-width="0.6"/><path d="M12 4L16 10H8Z" fill="#f4c400"/><circle cx="9" cy="15" r="3" fill="#d9363e"/><path d="M7.8 13.8l2.4 2.4M10.2 13.8l-2.4 2.4" stroke="#fff" stroke-width="0.8"/></svg>
<svg class="a" style="left:908px;top:918px;" width="12" height="8" viewBox="0 0 12 8"><path d="M1 7L6 1.5L11 7" stroke="#fff" stroke-width="1.2" fill="none"/></svg>
<svg class="a" style="left:931px;top:916px;" width="17" height="14" viewBox="0 0 17 14"><rect x="4.5" y="2.5" width="12" height="8" fill="none" stroke="#fff"/><path d="M10.5 10.5v2M7 13.5h7" stroke="#fff"/><rect x="0.5" y="0.5" width="4" height="4" fill="#000" stroke="#fff"/></svg>
<svg class="a" style="left:954px;top:916px;" width="17" height="15" viewBox="0 0 17 15"><path d="M1 5h2.5L7.5 1.5V12.5L3.5 9H1Z" fill="none" stroke="#fff"/><circle cx="12.5" cy="10.5" r="4" fill="#e81123"/><path d="M11 9l3 3M14 9l-3 3" stroke="#fff"/></svg>
<div class="t" style="left:998px;top:907.74px;font-size:12px;color:#fff;font-weight:normal;letter-spacing:-0.3px">13:06</div>
<div class="t" style="left:981px;top:925.74px;font-size:12px;color:#fff;font-weight:normal;letter-spacing:-0.3px">2016. 12. 10.</div>
<svg class="a" style="left:1061px;top:913px;" width="18" height="17" viewBox="0 0 18 17"><path d="M1.5 1.5h15v11h-7l-4 3.5v-3.5h-4Z" fill="none" stroke="#fff" stroke-width="1.2"/></svg>
<div class="a" style="left:1098px;top:902px;width:1px;height:39px;background:#333"></div>
<div class="a" style="left:592px;top:902px;width:30px;height:15px;background:#03030d"></div>
<svg class="a" style="left:505px;top:184px;" width="18" height="24" viewBox="0 0 18 24"><path d="M3.6 2.6V18.3Q3.8 19.2 4.6 18.5L7.6 15.3L10.3 20.3Q11.2 21 12.3 19.8L10.2 14.8L14.6 14.2Q15.1 13.6 14.6 13.1Z" fill="#fff" stroke="#111" stroke-width="1.1" stroke-linejoin="round"/></svg>
</body></html>
